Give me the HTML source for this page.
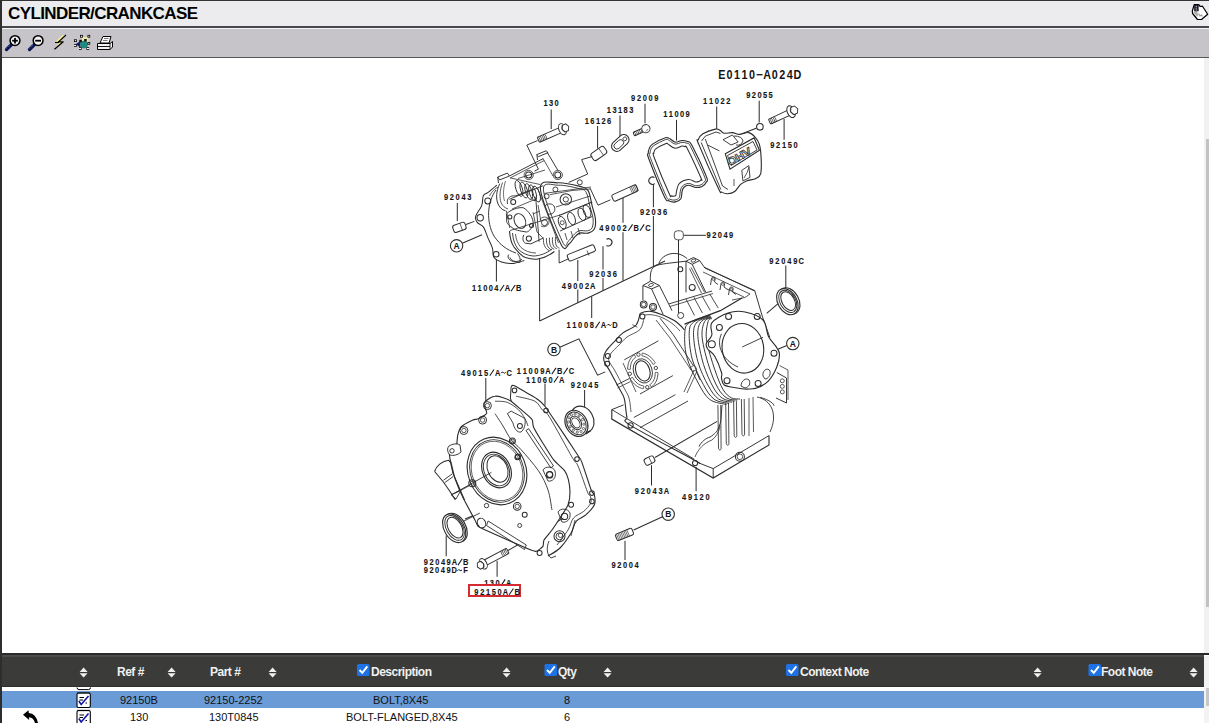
<!DOCTYPE html>
<html><head><meta charset="utf-8">
<style>
html,body{margin:0;padding:0;width:1209px;height:723px;overflow:hidden;background:#fff;font-family:"Liberation Sans",sans-serif;}
.a{position:absolute;}
#lb{left:0;top:0;width:2px;height:723px;background:#2e2f2d;}
#tb{left:0;top:0;width:1209px;height:1px;background:#333;}
#title{left:2px;top:1px;width:1207px;height:25px;background:#ececee;}
#title span{position:absolute;left:6px;top:3px;font-size:17px;font-weight:bold;color:#000;letter-spacing:-0.6px;}
#l1{left:2px;top:26px;width:1207px;height:2px;background:#48474c;}
#l2{left:2px;top:28px;width:1207px;height:1px;background:#f4f4f6;}
#tool{left:2px;top:29px;width:1207px;height:28px;background:#c6c4c8;}
#l3{left:2px;top:57px;width:1207px;height:1px;background:#58585a;}
#draw{left:2px;top:58px;width:1202px;height:595px;background:#fff;}
#sb{left:1204px;top:58px;width:5px;height:595px;background:#f1f1f1;}
#hdr{left:0;top:653px;width:1204px;height:34px;background:#3b3c3a;}
#hdrl{left:0;top:653px;width:1209px;height:2px;background:#2a2a2a;}
#hdrl2{left:0;top:655px;width:1204px;height:2px;background:#4b4b4b;}
#hdrl3{left:0;top:686px;width:1204px;height:1px;background:#2e2f2d;}
#hsb{left:1204px;top:656px;width:5px;height:67px;background:#f3f3f3;}
#th1{left:1206px;top:139px;width:3px;height:468px;background:#c2c2c2;}
#th2{left:1206px;top:688px;width:3px;height:18px;background:#c8c8c8;}
#r0{left:2px;top:687px;width:1202px;height:4px;background:#fff;}
#r1{left:2px;top:691px;width:1202px;height:17px;background:#6a9bd6;}
#r2{left:2px;top:708px;width:1202px;height:15px;background:#fff;}
.h{position:absolute;color:#f0f0f0;font-size:12px;font-weight:bold;top:665px;letter-spacing:-0.5px;}
.c{position:absolute;color:#111;font-size:11px;}
.sort{position:absolute;top:668px;width:8px;height:10px;}
.cb{position:absolute;top:664px;width:12px;height:12px;background:#1e74e6;border-radius:2px;}
.lb{font-family:"Liberation Sans",sans-serif;font-weight:bold;fill:#151515;}
</style></head><body>
<div class="a" id="tb"></div>
<div class="a" id="title"><span>CYLINDER/CRANKCASE</span></div>
<div class="a" id="l1"></div>
<div class="a" id="l2"></div>
<div class="a" id="tool"></div>
<div class="a" id="l3"></div>
<div class="a" id="draw"></div>
<div class="a" id="sb"></div>
<!--DRAW--><svg class="a" style="left:0;top:0" width="1209" height="723" viewBox="0 0 1209 723">
<g class="lb" font-size="12.86"><text transform="translate(721.90 78.90) scale(0.84 1)" text-anchor="middle">E</text><text transform="translate(729.44 78.90) scale(0.84 1)" text-anchor="middle">0</text><text transform="translate(736.98 78.90) scale(0.84 1)" text-anchor="middle">1</text><text transform="translate(744.52 78.90) scale(0.84 1)" text-anchor="middle">1</text><text transform="translate(752.06 78.90) scale(0.84 1)" text-anchor="middle">0</text><line x1="756.60" y1="74.70" x2="762.60" y2="74.70" stroke="#151515" stroke-width="1.3"/><text transform="translate(767.14 78.90) scale(0.84 1)" text-anchor="middle">A</text><text transform="translate(774.68 78.90) scale(0.84 1)" text-anchor="middle">0</text><text transform="translate(782.22 78.90) scale(0.84 1)" text-anchor="middle">2</text><text transform="translate(789.76 78.90) scale(0.84 1)" text-anchor="middle">4</text><text transform="translate(797.30 78.90) scale(0.84 1)" text-anchor="middle">D</text></g>
<g class="lb" font-size="8.90" style="stroke:#151515;stroke-width:0.12"><text transform="translate(545.50 106.20) scale(0.84 1)" text-anchor="middle">1</text><text transform="translate(551.00 106.20) scale(0.84 1)" text-anchor="middle">3</text><text transform="translate(556.50 106.20) scale(0.84 1)" text-anchor="middle">0</text></g>
<g class="lb" font-size="8.90" style="stroke:#151515;stroke-width:0.12"><text transform="translate(608.90 113.00) scale(0.84 1)" text-anchor="middle">1</text><text transform="translate(614.50 113.00) scale(0.84 1)" text-anchor="middle">3</text><text transform="translate(620.10 113.00) scale(0.84 1)" text-anchor="middle">1</text><text transform="translate(625.70 113.00) scale(0.84 1)" text-anchor="middle">8</text><text transform="translate(631.30 113.00) scale(0.84 1)" text-anchor="middle">3</text></g>
<g class="lb" font-size="8.90" style="stroke:#151515;stroke-width:0.12"><text transform="translate(633.20 100.90) scale(0.84 1)" text-anchor="middle">9</text><text transform="translate(638.98 100.90) scale(0.84 1)" text-anchor="middle">2</text><text transform="translate(644.75 100.90) scale(0.84 1)" text-anchor="middle">0</text><text transform="translate(650.52 100.90) scale(0.84 1)" text-anchor="middle">0</text><text transform="translate(656.30 100.90) scale(0.84 1)" text-anchor="middle">9</text></g>
<g class="lb" font-size="8.90" style="stroke:#151515;stroke-width:0.12"><text transform="translate(705.20 103.90) scale(0.84 1)" text-anchor="middle">1</text><text transform="translate(711.00 103.90) scale(0.84 1)" text-anchor="middle">1</text><text transform="translate(716.80 103.90) scale(0.84 1)" text-anchor="middle">0</text><text transform="translate(722.60 103.90) scale(0.84 1)" text-anchor="middle">2</text><text transform="translate(728.40 103.90) scale(0.84 1)" text-anchor="middle">2</text></g>
<g class="lb" font-size="8.90" style="stroke:#151515;stroke-width:0.12"><text transform="translate(748.30 97.80) scale(0.84 1)" text-anchor="middle">9</text><text transform="translate(753.90 97.80) scale(0.84 1)" text-anchor="middle">2</text><text transform="translate(759.50 97.80) scale(0.84 1)" text-anchor="middle">0</text><text transform="translate(765.10 97.80) scale(0.84 1)" text-anchor="middle">5</text><text transform="translate(770.70 97.80) scale(0.84 1)" text-anchor="middle">5</text></g>
<g class="lb" font-size="8.90" style="stroke:#151515;stroke-width:0.12"><text transform="translate(586.80 123.60) scale(0.84 1)" text-anchor="middle">1</text><text transform="translate(592.40 123.60) scale(0.84 1)" text-anchor="middle">6</text><text transform="translate(598.00 123.60) scale(0.84 1)" text-anchor="middle">1</text><text transform="translate(603.60 123.60) scale(0.84 1)" text-anchor="middle">2</text><text transform="translate(609.20 123.60) scale(0.84 1)" text-anchor="middle">6</text></g>
<g class="lb" font-size="8.90" style="stroke:#151515;stroke-width:0.12"><text transform="translate(665.30 116.70) scale(0.84 1)" text-anchor="middle">1</text><text transform="translate(670.90 116.70) scale(0.84 1)" text-anchor="middle">1</text><text transform="translate(676.50 116.70) scale(0.84 1)" text-anchor="middle">0</text><text transform="translate(682.10 116.70) scale(0.84 1)" text-anchor="middle">0</text><text transform="translate(687.70 116.70) scale(0.84 1)" text-anchor="middle">9</text></g>
<g class="lb" font-size="8.90" style="stroke:#151515;stroke-width:0.12"><text transform="translate(772.40 148.20) scale(0.84 1)" text-anchor="middle">9</text><text transform="translate(778.20 148.20) scale(0.84 1)" text-anchor="middle">2</text><text transform="translate(784.00 148.20) scale(0.84 1)" text-anchor="middle">1</text><text transform="translate(789.80 148.20) scale(0.84 1)" text-anchor="middle">5</text><text transform="translate(795.60 148.20) scale(0.84 1)" text-anchor="middle">0</text></g>
<g class="lb" font-size="8.90" style="stroke:#151515;stroke-width:0.12"><text transform="translate(446.10 199.50) scale(0.84 1)" text-anchor="middle">9</text><text transform="translate(451.90 199.50) scale(0.84 1)" text-anchor="middle">2</text><text transform="translate(457.70 199.50) scale(0.84 1)" text-anchor="middle">0</text><text transform="translate(463.50 199.50) scale(0.84 1)" text-anchor="middle">4</text><text transform="translate(469.30 199.50) scale(0.84 1)" text-anchor="middle">3</text></g>
<g class="lb" font-size="8.90" style="stroke:#151515;stroke-width:0.12"><text transform="translate(642.10 214.60) scale(0.84 1)" text-anchor="middle">9</text><text transform="translate(647.83 214.60) scale(0.84 1)" text-anchor="middle">2</text><text transform="translate(653.55 214.60) scale(0.84 1)" text-anchor="middle">0</text><text transform="translate(659.28 214.60) scale(0.84 1)" text-anchor="middle">3</text><text transform="translate(665.00 214.60) scale(0.84 1)" text-anchor="middle">6</text></g>
<g class="lb" font-size="8.90" style="stroke:#151515;stroke-width:0.12"><text transform="translate(601.40 230.70) scale(0.84 1)" text-anchor="middle">4</text><text transform="translate(607.21 230.70) scale(0.84 1)" text-anchor="middle">9</text><text transform="translate(613.02 230.70) scale(0.84 1)" text-anchor="middle">0</text><text transform="translate(618.84 230.70) scale(0.84 1)" text-anchor="middle">0</text><text transform="translate(624.65 230.70) scale(0.84 1)" text-anchor="middle">2</text><line x1="628.36" y1="230.70" x2="632.56" y2="224.40" stroke="#151515" stroke-width="1.05"/><text transform="translate(636.27 230.70) scale(0.84 1)" text-anchor="middle">B</text><line x1="639.99" y1="230.70" x2="644.19" y2="224.40" stroke="#151515" stroke-width="1.05"/><text transform="translate(647.90 230.70) scale(0.84 1)" text-anchor="middle">C</text></g>
<g class="lb" font-size="8.90" style="stroke:#151515;stroke-width:0.12"><text transform="translate(708.70 238.20) scale(0.84 1)" text-anchor="middle">9</text><text transform="translate(714.33 238.20) scale(0.84 1)" text-anchor="middle">2</text><text transform="translate(719.95 238.20) scale(0.84 1)" text-anchor="middle">0</text><text transform="translate(725.58 238.20) scale(0.84 1)" text-anchor="middle">4</text><text transform="translate(731.20 238.20) scale(0.84 1)" text-anchor="middle">9</text></g>
<g class="lb" font-size="8.90" style="stroke:#151515;stroke-width:0.12"><text transform="translate(591.40 277.40) scale(0.84 1)" text-anchor="middle">9</text><text transform="translate(597.27 277.40) scale(0.84 1)" text-anchor="middle">2</text><text transform="translate(603.15 277.40) scale(0.84 1)" text-anchor="middle">0</text><text transform="translate(609.02 277.40) scale(0.84 1)" text-anchor="middle">3</text><text transform="translate(614.90 277.40) scale(0.84 1)" text-anchor="middle">6</text></g>
<g class="lb" font-size="8.90" style="stroke:#151515;stroke-width:0.12"><text transform="translate(771.30 263.90) scale(0.84 1)" text-anchor="middle">9</text><text transform="translate(777.28 263.90) scale(0.84 1)" text-anchor="middle">2</text><text transform="translate(783.26 263.90) scale(0.84 1)" text-anchor="middle">0</text><text transform="translate(789.24 263.90) scale(0.84 1)" text-anchor="middle">4</text><text transform="translate(795.22 263.90) scale(0.84 1)" text-anchor="middle">9</text><text transform="translate(801.20 263.90) scale(0.84 1)" text-anchor="middle">C</text></g>
<g class="lb" font-size="8.90" style="stroke:#151515;stroke-width:0.12"><text transform="translate(474.10 291.30) scale(0.84 1)" text-anchor="middle">1</text><text transform="translate(479.68 291.30) scale(0.84 1)" text-anchor="middle">1</text><text transform="translate(485.25 291.30) scale(0.84 1)" text-anchor="middle">0</text><text transform="translate(490.82 291.30) scale(0.84 1)" text-anchor="middle">0</text><text transform="translate(496.40 291.30) scale(0.84 1)" text-anchor="middle">4</text><line x1="499.88" y1="291.30" x2="504.08" y2="285.00" stroke="#151515" stroke-width="1.05"/><text transform="translate(507.55 291.30) scale(0.84 1)" text-anchor="middle">A</text><line x1="511.02" y1="291.30" x2="515.23" y2="285.00" stroke="#151515" stroke-width="1.05"/><text transform="translate(518.70 291.30) scale(0.84 1)" text-anchor="middle">B</text></g>
<g class="lb" font-size="8.90" style="stroke:#151515;stroke-width:0.12"><text transform="translate(563.80 288.50) scale(0.84 1)" text-anchor="middle">4</text><text transform="translate(569.60 288.50) scale(0.84 1)" text-anchor="middle">9</text><text transform="translate(575.40 288.50) scale(0.84 1)" text-anchor="middle">0</text><text transform="translate(581.20 288.50) scale(0.84 1)" text-anchor="middle">0</text><text transform="translate(587.00 288.50) scale(0.84 1)" text-anchor="middle">2</text><text transform="translate(592.80 288.50) scale(0.84 1)" text-anchor="middle">A</text></g>
<g class="lb" font-size="8.90" style="stroke:#151515;stroke-width:0.12"><text transform="translate(568.60 328.10) scale(0.84 1)" text-anchor="middle">1</text><text transform="translate(574.40 328.10) scale(0.84 1)" text-anchor="middle">1</text><text transform="translate(580.20 328.10) scale(0.84 1)" text-anchor="middle">0</text><text transform="translate(586.00 328.10) scale(0.84 1)" text-anchor="middle">0</text><text transform="translate(591.80 328.10) scale(0.84 1)" text-anchor="middle">8</text><line x1="595.50" y1="328.10" x2="599.70" y2="321.80" stroke="#151515" stroke-width="1.05"/><text transform="translate(603.40 328.10) scale(0.84 1)" text-anchor="middle">A</text><path d="M606.90,325.50 Q608.00,323.50 609.20,324.90 T611.50,324.50" fill="none" stroke="#151515" stroke-width="1.0"/><text transform="translate(615.00 328.10) scale(0.84 1)" text-anchor="middle">D</text></g>
<g class="lb" font-size="8.90" style="stroke:#151515;stroke-width:0.12"><text transform="translate(463.10 375.80) scale(0.84 1)" text-anchor="middle">4</text><text transform="translate(468.86 375.80) scale(0.84 1)" text-anchor="middle">9</text><text transform="translate(474.62 375.80) scale(0.84 1)" text-anchor="middle">0</text><text transform="translate(480.39 375.80) scale(0.84 1)" text-anchor="middle">1</text><text transform="translate(486.15 375.80) scale(0.84 1)" text-anchor="middle">5</text><line x1="489.81" y1="375.80" x2="494.01" y2="369.50" stroke="#151515" stroke-width="1.05"/><text transform="translate(497.68 375.80) scale(0.84 1)" text-anchor="middle">A</text><path d="M501.14,373.20 Q502.24,371.20 503.44,372.60 T505.74,372.20" fill="none" stroke="#151515" stroke-width="1.0"/><text transform="translate(509.20 375.80) scale(0.84 1)" text-anchor="middle">C</text></g>
<g class="lb" font-size="8.90" style="stroke:#151515;stroke-width:0.12"><text transform="translate(518.90 374.20) scale(0.84 1)" text-anchor="middle">1</text><text transform="translate(524.73 374.20) scale(0.84 1)" text-anchor="middle">1</text><text transform="translate(530.57 374.20) scale(0.84 1)" text-anchor="middle">0</text><text transform="translate(536.40 374.20) scale(0.84 1)" text-anchor="middle">0</text><text transform="translate(542.23 374.20) scale(0.84 1)" text-anchor="middle">9</text><text transform="translate(548.07 374.20) scale(0.84 1)" text-anchor="middle">A</text><line x1="551.80" y1="374.20" x2="556.00" y2="367.90" stroke="#151515" stroke-width="1.05"/><text transform="translate(559.73 374.20) scale(0.84 1)" text-anchor="middle">B</text><line x1="563.47" y1="374.20" x2="567.67" y2="367.90" stroke="#151515" stroke-width="1.05"/><text transform="translate(571.40 374.20) scale(0.84 1)" text-anchor="middle">C</text></g>
<g class="lb" font-size="8.90" style="stroke:#151515;stroke-width:0.12"><text transform="translate(528.10 382.50) scale(0.84 1)" text-anchor="middle">1</text><text transform="translate(533.70 382.50) scale(0.84 1)" text-anchor="middle">1</text><text transform="translate(539.30 382.50) scale(0.84 1)" text-anchor="middle">0</text><text transform="translate(544.90 382.50) scale(0.84 1)" text-anchor="middle">6</text><text transform="translate(550.50 382.50) scale(0.84 1)" text-anchor="middle">0</text><line x1="554.00" y1="382.50" x2="558.20" y2="376.20" stroke="#151515" stroke-width="1.05"/><text transform="translate(561.70 382.50) scale(0.84 1)" text-anchor="middle">A</text></g>
<g class="lb" font-size="8.90" style="stroke:#151515;stroke-width:0.12"><text transform="translate(572.90 387.50) scale(0.84 1)" text-anchor="middle">9</text><text transform="translate(578.75 387.50) scale(0.84 1)" text-anchor="middle">2</text><text transform="translate(584.60 387.50) scale(0.84 1)" text-anchor="middle">0</text><text transform="translate(590.45 387.50) scale(0.84 1)" text-anchor="middle">4</text><text transform="translate(596.30 387.50) scale(0.84 1)" text-anchor="middle">5</text></g>
<g class="lb" font-size="8.90" style="stroke:#151515;stroke-width:0.12"><text transform="translate(636.80 494.00) scale(0.84 1)" text-anchor="middle">9</text><text transform="translate(642.74 494.00) scale(0.84 1)" text-anchor="middle">2</text><text transform="translate(648.68 494.00) scale(0.84 1)" text-anchor="middle">0</text><text transform="translate(654.62 494.00) scale(0.84 1)" text-anchor="middle">4</text><text transform="translate(660.56 494.00) scale(0.84 1)" text-anchor="middle">3</text><text transform="translate(666.50 494.00) scale(0.84 1)" text-anchor="middle">A</text></g>
<g class="lb" font-size="8.90" style="stroke:#151515;stroke-width:0.12"><text transform="translate(684.20 499.80) scale(0.84 1)" text-anchor="middle">4</text><text transform="translate(690.03 499.80) scale(0.84 1)" text-anchor="middle">9</text><text transform="translate(695.85 499.80) scale(0.84 1)" text-anchor="middle">1</text><text transform="translate(701.68 499.80) scale(0.84 1)" text-anchor="middle">2</text><text transform="translate(707.50 499.80) scale(0.84 1)" text-anchor="middle">0</text></g>
<g class="lb" font-size="8.90" style="stroke:#151515;stroke-width:0.12"><text transform="translate(613.60 568.00) scale(0.84 1)" text-anchor="middle">9</text><text transform="translate(619.33 568.00) scale(0.84 1)" text-anchor="middle">2</text><text transform="translate(625.05 568.00) scale(0.84 1)" text-anchor="middle">0</text><text transform="translate(630.78 568.00) scale(0.84 1)" text-anchor="middle">0</text><text transform="translate(636.50 568.00) scale(0.84 1)" text-anchor="middle">4</text></g>
<g class="lb" font-size="8.90" style="stroke:#151515;stroke-width:0.12"><text transform="translate(425.90 565.10) scale(0.84 1)" text-anchor="middle">9</text><text transform="translate(431.60 565.10) scale(0.84 1)" text-anchor="middle">2</text><text transform="translate(437.30 565.10) scale(0.84 1)" text-anchor="middle">0</text><text transform="translate(443.00 565.10) scale(0.84 1)" text-anchor="middle">4</text><text transform="translate(448.70 565.10) scale(0.84 1)" text-anchor="middle">9</text><text transform="translate(454.40 565.10) scale(0.84 1)" text-anchor="middle">A</text><line x1="458.00" y1="565.10" x2="462.20" y2="558.80" stroke="#151515" stroke-width="1.05"/><text transform="translate(465.80 565.10) scale(0.84 1)" text-anchor="middle">B</text></g>
<g class="lb" font-size="8.90" style="stroke:#151515;stroke-width:0.12"><text transform="translate(425.90 573.40) scale(0.84 1)" text-anchor="middle">9</text><text transform="translate(431.54 573.40) scale(0.84 1)" text-anchor="middle">2</text><text transform="translate(437.19 573.40) scale(0.84 1)" text-anchor="middle">0</text><text transform="translate(442.83 573.40) scale(0.84 1)" text-anchor="middle">4</text><text transform="translate(448.47 573.40) scale(0.84 1)" text-anchor="middle">9</text><text transform="translate(454.11 573.40) scale(0.84 1)" text-anchor="middle">D</text><path d="M457.46,570.80 Q458.56,568.80 459.76,570.20 T462.06,569.80" fill="none" stroke="#151515" stroke-width="1.0"/><text transform="translate(465.40 573.40) scale(0.84 1)" text-anchor="middle">F</text></g>
<g clip-path="url(#clip130)">
<g class="lb" font-size="8.90" style="stroke:#151515;stroke-width:0.12"><text transform="translate(486.30 585.70) scale(0.84 1)" text-anchor="middle">1</text><text transform="translate(491.90 585.70) scale(0.84 1)" text-anchor="middle">3</text><text transform="translate(497.50 585.70) scale(0.84 1)" text-anchor="middle">0</text><line x1="501.00" y1="585.70" x2="505.20" y2="579.40" stroke="#151515" stroke-width="1.05"/><text transform="translate(508.70 585.70) scale(0.84 1)" text-anchor="middle">A</text></g>
</g>
<defs><clipPath id="clip130"><rect x="400" y="560" width="200" height="25"/></clipPath></defs>
<rect x="469" y="585" width="51" height="11" fill="none" stroke="#d42a32" stroke-width="2"/>
<g class="lb" font-size="8.90" style="stroke:#151515;stroke-width:0.12"><text transform="translate(476.40 594.80) scale(0.84 1)" text-anchor="middle">9</text><text transform="translate(482.21 594.80) scale(0.84 1)" text-anchor="middle">2</text><text transform="translate(488.03 594.80) scale(0.84 1)" text-anchor="middle">1</text><text transform="translate(493.84 594.80) scale(0.84 1)" text-anchor="middle">5</text><text transform="translate(499.66 594.80) scale(0.84 1)" text-anchor="middle">0</text><text transform="translate(505.47 594.80) scale(0.84 1)" text-anchor="middle">A</text><line x1="509.19" y1="594.80" x2="513.39" y2="588.50" stroke="#151515" stroke-width="1.05"/><text transform="translate(517.10 594.80) scale(0.84 1)" text-anchor="middle">B</text></g>
<line x1="551.2" y1="109.4" x2="551.2" y2="129.0" stroke="#2c2c2c" stroke-width="1.01"/>
<line x1="597.6" y1="126.0" x2="597.6" y2="148.5" stroke="#2c2c2c" stroke-width="1.01"/>
<line x1="620.0" y1="115.4" x2="620.0" y2="136.7" stroke="#2c2c2c" stroke-width="1.01"/>
<line x1="645.0" y1="103.8" x2="645.0" y2="123.2" stroke="#2c2c2c" stroke-width="1.01"/>
<line x1="676.5" y1="119.9" x2="676.5" y2="140.6" stroke="#2c2c2c" stroke-width="1.01"/>
<line x1="716.7" y1="106.6" x2="716.7" y2="129.0" stroke="#2c2c2c" stroke-width="1.01"/>
<line x1="759.2" y1="100.8" x2="759.2" y2="122.4" stroke="#2c2c2c" stroke-width="1.01"/>
<line x1="784.1" y1="119.0" x2="784.1" y2="139.8" stroke="#2c2c2c" stroke-width="1.01"/>
<line x1="457.3" y1="203.0" x2="457.3" y2="221.0" stroke="#2c2c2c" stroke-width="1.01"/>
<line x1="496.4" y1="259.5" x2="496.4" y2="281.6" stroke="#2c2c2c" stroke-width="1.01"/>
<line x1="653.4" y1="184.3" x2="653.4" y2="207.3" stroke="#2c2c2c" stroke-width="1.01"/>
<line x1="653.4" y1="216.0" x2="653.4" y2="266.8" stroke="#2c2c2c" stroke-width="1.01"/>
<line x1="623.0" y1="198.0" x2="623.0" y2="222.7" stroke="#2c2c2c" stroke-width="1.01"/>
<line x1="623.0" y1="232.2" x2="623.0" y2="280.7" stroke="#2c2c2c" stroke-width="1.01"/>
<line x1="603.0" y1="246.2" x2="603.0" y2="269.4" stroke="#2c2c2c" stroke-width="1.01"/>
<line x1="603.0" y1="278.0" x2="603.0" y2="290.8" stroke="#2c2c2c" stroke-width="1.01"/>
<line x1="577.8" y1="260.0" x2="577.8" y2="281.0" stroke="#2c2c2c" stroke-width="1.01"/>
<line x1="577.8" y1="289.5" x2="577.8" y2="302.7" stroke="#2c2c2c" stroke-width="1.01"/>
<line x1="539.6" y1="259.0" x2="539.6" y2="321.0" stroke="#2c2c2c" stroke-width="1.01"/>
<line x1="539.6" y1="321.0" x2="665.0" y2="261.0" stroke="#2c2c2c" stroke-width="1.01"/>
<line x1="591.7" y1="296.5" x2="591.7" y2="318.0" stroke="#2c2c2c" stroke-width="1.01"/>
<line x1="683.8" y1="235.3" x2="705.9" y2="235.3" stroke="#2c2c2c" stroke-width="1.01"/>
<line x1="678.5" y1="239.7" x2="678.5" y2="313.0" stroke="#2c2c2c" stroke-width="1.01"/>
<line x1="785.8" y1="265.5" x2="785.8" y2="288.0" stroke="#2c2c2c" stroke-width="1.01"/>
<line x1="485.8" y1="378.0" x2="485.8" y2="401.5" stroke="#2c2c2c" stroke-width="1.01"/>
<line x1="545.0" y1="383.5" x2="545.0" y2="405.6" stroke="#2c2c2c" stroke-width="1.01"/>
<line x1="584.6" y1="390.0" x2="584.6" y2="408.0" stroke="#2c2c2c" stroke-width="1.01"/>
<line x1="651.5" y1="465.2" x2="651.5" y2="485.5" stroke="#2c2c2c" stroke-width="1.01"/>
<line x1="696.1" y1="467.0" x2="696.1" y2="491.3" stroke="#2c2c2c" stroke-width="1.01"/>
<line x1="625.0" y1="540.7" x2="625.0" y2="560.0" stroke="#2c2c2c" stroke-width="1.01"/>
<line x1="446.2" y1="535.6" x2="446.2" y2="556.2" stroke="#2c2c2c" stroke-width="1.01"/>
<line x1="497.1" y1="560.7" x2="497.1" y2="576.7" stroke="#2c2c2c" stroke-width="1.01"/>
<circle cx="456.6" cy="245.8" r="6.2" fill="#fff" stroke="#333" stroke-width="1.12"/>
<text x="456.6" y="249.0" font-size="8.5" text-anchor="middle" class="lb">A</text>
<line x1="462.3" y1="243.3" x2="482.0" y2="234.7" stroke="#2c2c2c" stroke-width="1.01"/>
<circle cx="792.8" cy="343.6" r="6.2" fill="#fff" stroke="#333" stroke-width="1.12"/>
<text x="792.8" y="346.8" font-size="8.5" text-anchor="middle" class="lb">A</text>
<line x1="786.8" y1="345.5" x2="776.2" y2="350.0" stroke="#2c2c2c" stroke-width="1.01"/>
<circle cx="554.0" cy="349.5" r="6.2" fill="#fff" stroke="#333" stroke-width="1.12"/>
<text x="554.0" y="352.7" font-size="8.5" text-anchor="middle" class="lb">B</text>
<polyline points="559.8,347.3 578.9,338.8 597.6,375.2 605.3,371.9" fill="none" stroke="#2c2c2c" stroke-width="1.01"/>
<circle cx="668.2" cy="514.2" r="6.2" fill="#fff" stroke="#333" stroke-width="1.12"/>
<text x="668.2" y="517.4" font-size="8.5" text-anchor="middle" class="lb">B</text>
<line x1="662.5" y1="516.8" x2="633.7" y2="530.0" stroke="#2c2c2c" stroke-width="1.01"/>
<g transform="translate(562.5 129.2) rotate(156.3)"><rect x="0" y="-2.8" width="26.4" height="5.5" rx="1" fill="#fff" stroke="#2c2c2c" stroke-width="0.95"/><path d="M25.1,-2.8 Q24.2,0 25.1,2.8" fill="none" stroke="#2c2c2c" stroke-width="0.7"/><path d="M23.4,-2.8 Q22.5,0 23.4,2.8" fill="none" stroke="#2c2c2c" stroke-width="0.7"/><path d="M21.7,-2.8 Q20.8,0 21.7,2.8" fill="none" stroke="#2c2c2c" stroke-width="0.7"/><path d="M20.0,-2.8 Q19.1,0 20.0,2.8" fill="none" stroke="#2c2c2c" stroke-width="0.7"/><path d="M18.3,-2.8 Q17.4,0 18.3,2.8" fill="none" stroke="#2c2c2c" stroke-width="0.7"/><ellipse cx="0" cy="0" rx="3.6" ry="5.8" fill="#fff" stroke="#2c2c2c" stroke-width="1.0"/><polygon points="0.4,0.0 -1.4,3.6 -5.0,3.6 -6.8,0.0 -5.0,-3.6 -1.4,-3.6" fill="#fff" stroke="#2c2c2c" stroke-width="0.9"/><path d="M-1.2,-3.6 Q2.0,0 -1.2,3.6" fill="none" stroke="#2c2c2c" stroke-width="0.7"/></g>
<g transform="translate(598.8 153.4) rotate(-35.2)"><rect x="-7.9" y="-4.2" width="15.8" height="8.5" rx="2.5" fill="#fff" stroke="#2c2c2c" stroke-width="1.01"/><line x1="2.8" y1="-4.2" x2="2.8" y2="4.2" stroke="#2c2c2c" stroke-width="0.7"/></g>
<g transform="translate(620.3 143) rotate(-42)"><rect x="-10" y="-5.2" width="20" height="10.4" rx="5.2" fill="#fff" stroke="#2c2c2c" stroke-width="1.05"/><rect x="-7.5" y="-3" width="11" height="6" rx="3" fill="none" stroke="#2c2c2c" stroke-width="0.85"/><circle cx="6.2" cy="0" r="1.9" fill="none" stroke="#2c2c2c" stroke-width="0.8"/></g>
<g transform="translate(645.9 128.7) rotate(155.6)"><rect x="0" y="-1.9" width="13.3" height="3.8" rx="1" fill="#fff" stroke="#2c2c2c" stroke-width="0.95"/><path d="M12.0,-1.9 Q11.1,0 12.0,1.9" fill="none" stroke="#2c2c2c" stroke-width="0.7"/><path d="M10.3,-1.9 Q9.4,0 10.3,1.9" fill="none" stroke="#2c2c2c" stroke-width="0.7"/><path d="M8.6,-1.9 Q7.7,0 8.6,1.9" fill="none" stroke="#2c2c2c" stroke-width="0.7"/><path d="M6.9,-1.9 Q6.0,0 6.9,1.9" fill="none" stroke="#2c2c2c" stroke-width="0.7"/><path d="M5.2,-1.9 Q4.3,0 5.2,1.9" fill="none" stroke="#2c2c2c" stroke-width="0.7"/><circle cx="0" cy="0" r="4.1" fill="#fff" stroke="#2c2c2c" stroke-width="0.95"/><path d="M-2.0,-1.2 L1.2,-2.5" stroke="#2c2c2c" stroke-width="0.6"/></g>
<circle cx="759.9" cy="126.8" r="3.3" fill="none" stroke="#2c2c2c" stroke-width="1.12"/>
<g transform="translate(791.1 111.7) rotate(155.2)"><rect x="0" y="-2.7" width="23.8" height="5.4" rx="1" fill="#fff" stroke="#2c2c2c" stroke-width="0.95"/><path d="M22.5,-2.7 Q21.6,0 22.5,2.7" fill="none" stroke="#2c2c2c" stroke-width="0.7"/><path d="M20.8,-2.7 Q19.9,0 20.8,2.7" fill="none" stroke="#2c2c2c" stroke-width="0.7"/><path d="M19.1,-2.7 Q18.2,0 19.1,2.7" fill="none" stroke="#2c2c2c" stroke-width="0.7"/><path d="M17.4,-2.7 Q16.5,0 17.4,2.7" fill="none" stroke="#2c2c2c" stroke-width="0.7"/><ellipse cx="0" cy="0" rx="3.8" ry="6.2" fill="#fff" stroke="#2c2c2c" stroke-width="1.0"/><polygon points="0.4,0.0 -1.5,3.9 -5.3,3.9 -7.3,0.0 -5.3,-3.9 -1.5,-3.9" fill="#fff" stroke="#2c2c2c" stroke-width="0.9"/><path d="M-1.2,-3.8 Q2.2,0 -1.2,3.8" fill="none" stroke="#2c2c2c" stroke-width="0.7"/></g>
<line x1="726.3" y1="139.8" x2="756.2" y2="128.2" stroke="#2c2c2c" stroke-width="1.01"/>
<g transform="translate(459.4 227.4) rotate(-20.0)"><rect x="-6.4" y="-3.8" width="12.9" height="7.5" rx="2.2" fill="#fff" stroke="#2c2c2c" stroke-width="1.01"/><line x1="1.9" y1="-3.8" x2="1.9" y2="3.8" stroke="#2c2c2c" stroke-width="0.7"/></g>
<line x1="466.0" y1="224.5" x2="474.3" y2="221.4" stroke="#2c2c2c" stroke-width="1.01"/>
<g transform="translate(624.8 193.1) rotate(-24.4)"><rect x="-13.3" y="-3.5" width="26.7" height="7.0" rx="1.8" fill="#fff" stroke="#2c2c2c" stroke-width="1.01"/><line x1="6.9" y1="-3.5" x2="6.9" y2="3.5" stroke="#2c2c2c" stroke-width="0.6"/><line x1="8.5" y1="-3.5" x2="8.5" y2="3.5" stroke="#2c2c2c" stroke-width="0.6"/><line x1="10.1" y1="-3.5" x2="10.1" y2="3.5" stroke="#2c2c2c" stroke-width="0.6"/><line x1="11.7" y1="-3.5" x2="11.7" y2="3.5" stroke="#2c2c2c" stroke-width="0.6"/><line x1="13.3" y1="-3.5" x2="13.3" y2="3.5" stroke="#2c2c2c" stroke-width="0.6"/></g>
<path d="M654.5,177.5 A3.7,3.7 0 1 0 654.8,183.6" fill="none" stroke="#2c2c2c" stroke-width="1.12"/>
<path d="M606.5,239.2 A3.6,3.6 0 1 1 606.5,245.4" fill="none" stroke="#2c2c2c" stroke-width="1.12"/>
<g transform="translate(581.4 252.9) rotate(-22.1)"><rect x="-14.4" y="-3.5" width="28.7" height="7.0" rx="1.8" fill="#fff" stroke="#2c2c2c" stroke-width="1.01"/></g>
<line x1="587.0" y1="250.5" x2="589.0" y2="255.5" stroke="#2c2c2c" stroke-width="0.78"/>
<rect x="674.3" y="230.8" width="9" height="9" rx="3" fill="#fff" stroke="#404040" stroke-width="0.9"/>
<ellipse cx="789.2" cy="300.8" rx="9.5" ry="14.0" transform="rotate(-30 789.2 300.8)" fill="none" stroke="#2c2c2c" stroke-width="1.12"/>
<ellipse cx="787.4" cy="301.7" rx="9.5" ry="14.0" transform="rotate(-30 787.4 301.7)" fill="#fff" stroke="#2c2c2c" stroke-width="1.12"/>
<ellipse cx="787.8" cy="301.4" rx="7.8" ry="12.0" transform="rotate(-30 787.8 301.4)" fill="none" stroke="#2c2c2c" stroke-width="0.90"/>
<ellipse cx="788.2" cy="301.1" rx="6.2" ry="10.2" transform="rotate(-30 788.2 301.1)" fill="none" stroke="#2c2c2c" stroke-width="1.01"/>
<line x1="777.8" y1="303.8" x2="766.7" y2="313.4" stroke="#2c2c2c" stroke-width="1.01"/>
<ellipse cx="582.5" cy="419.3" rx="10.7" ry="13.8" transform="rotate(-30 582.5 419.3)" fill="#fff" stroke="#2c2c2c" stroke-width="1.12"/>
<line x1="586.0" y1="434.0" x2="591.0" y2="430.5" stroke="#2c2c2c" stroke-width="1.01"/>
<ellipse cx="576.4" cy="423.4" rx="10.7" ry="13.8" transform="rotate(-30 576.4 423.4)" fill="#fff" stroke="#2c2c2c" stroke-width="1.12"/>
<ellipse cx="576.4" cy="423.4" rx="9.0" ry="12.0" transform="rotate(-30 576.4 423.4)" fill="none" stroke="#2c2c2c" stroke-width="0.90"/>
<ellipse cx="575.9" cy="422.9" rx="5.2" ry="7.2" transform="rotate(-30 575.9 422.9)" fill="none" stroke="#2c2c2c" stroke-width="0.90"/>
<ellipse cx="575.9" cy="422.9" rx="3.6" ry="5.4" transform="rotate(-30 575.9 422.9)" fill="none" stroke="#2c2c2c" stroke-width="0.90"/>
<circle cx="582.3" cy="419.6" r="1.1" fill="none" stroke="#2c2c2c" stroke-width="0.67"/>
<circle cx="583.9" cy="424.2" r="1.1" fill="none" stroke="#2c2c2c" stroke-width="0.67"/>
<circle cx="583.4" cy="428.5" r="1.1" fill="none" stroke="#2c2c2c" stroke-width="0.67"/>
<circle cx="581.0" cy="431.4" r="1.1" fill="none" stroke="#2c2c2c" stroke-width="0.67"/>
<circle cx="577.3" cy="432.1" r="1.1" fill="none" stroke="#2c2c2c" stroke-width="0.67"/>
<circle cx="573.3" cy="430.3" r="1.1" fill="none" stroke="#2c2c2c" stroke-width="0.67"/>
<circle cx="570.1" cy="426.7" r="1.1" fill="none" stroke="#2c2c2c" stroke-width="0.67"/>
<circle cx="568.5" cy="422.0" r="1.1" fill="none" stroke="#2c2c2c" stroke-width="0.67"/>
<circle cx="569.0" cy="417.7" r="1.1" fill="none" stroke="#2c2c2c" stroke-width="0.67"/>
<circle cx="571.4" cy="414.8" r="1.1" fill="none" stroke="#2c2c2c" stroke-width="0.67"/>
<circle cx="575.1" cy="414.1" r="1.1" fill="none" stroke="#2c2c2c" stroke-width="0.67"/>
<circle cx="579.1" cy="415.9" r="1.1" fill="none" stroke="#2c2c2c" stroke-width="0.67"/>
<ellipse cx="455.7" cy="527.6" rx="10.0" ry="15.5" transform="rotate(-30 455.7 527.6)" fill="none" stroke="#2c2c2c" stroke-width="1.12"/>
<ellipse cx="454.2" cy="528.2" rx="10.0" ry="15.5" transform="rotate(-30 454.2 528.2)" fill="#fff" stroke="#2c2c2c" stroke-width="1.12"/>
<ellipse cx="454.6" cy="527.9" rx="8.2" ry="13.5" transform="rotate(-30 454.6 527.9)" fill="none" stroke="#2c2c2c" stroke-width="0.90"/>
<ellipse cx="455.0" cy="527.6" rx="6.6" ry="11.3" transform="rotate(-30 455.0 527.6)" fill="none" stroke="#2c2c2c" stroke-width="1.01"/>
<line x1="465.0" y1="519.0" x2="482.0" y2="512.0" stroke="#2c2c2c" stroke-width="1.01"/>
<g transform="translate(483.2 563.8) rotate(-27.9)"><rect x="0" y="-2.9" width="27.8" height="5.8" rx="1" fill="#fff" stroke="#2c2c2c" stroke-width="0.95"/><path d="M26.5,-2.9 Q25.6,0 26.5,2.9" fill="none" stroke="#2c2c2c" stroke-width="0.7"/><path d="M24.8,-2.9 Q23.9,0 24.8,2.9" fill="none" stroke="#2c2c2c" stroke-width="0.7"/><path d="M23.1,-2.9 Q22.2,0 23.1,2.9" fill="none" stroke="#2c2c2c" stroke-width="0.7"/><path d="M21.4,-2.9 Q20.5,0 21.4,2.9" fill="none" stroke="#2c2c2c" stroke-width="0.7"/><ellipse cx="0" cy="0" rx="3.5" ry="5.6" fill="#fff" stroke="#2c2c2c" stroke-width="1.0"/><polygon points="0.4,0.0 -1.3,3.5 -4.8,3.5 -6.6,0.0 -4.8,-3.5 -1.3,-3.5" fill="#fff" stroke="#2c2c2c" stroke-width="0.9"/><path d="M-1.1,-3.5 Q2.0,0 -1.1,3.5" fill="none" stroke="#2c2c2c" stroke-width="0.7"/></g>
<line x1="508.0" y1="550.5" x2="563.3" y2="518.1" stroke="#2c2c2c" stroke-width="1.01"/>
<g transform="translate(649.5 460.6) rotate(-26.3)"><rect x="-5.1" y="-3.5" width="10.2" height="7.0" rx="2.1" fill="#fff" stroke="#2c2c2c" stroke-width="1.01"/><line x1="0.9" y1="-3.5" x2="0.9" y2="3.5" stroke="#2c2c2c" stroke-width="0.7"/></g>
<line x1="655.0" y1="457.5" x2="717.1" y2="421.4" stroke="#2c2c2c" stroke-width="1.01"/>
<g transform="translate(624.5 534.4) rotate(-22.4)"><rect x="-8.9" y="-3.5" width="17.8" height="7.0" rx="1.8" fill="#fff" stroke="#2c2c2c" stroke-width="1.01"/><line x1="-7.3" y1="-3.5" x2="-7.3" y2="3.5" stroke="#2c2c2c" stroke-width="0.6"/><line x1="-5.7" y1="-3.5" x2="-5.7" y2="3.5" stroke="#2c2c2c" stroke-width="0.6"/><line x1="-4.1" y1="-3.5" x2="-4.1" y2="3.5" stroke="#2c2c2c" stroke-width="0.6"/><line x1="-2.5" y1="-3.5" x2="-2.5" y2="3.5" stroke="#2c2c2c" stroke-width="0.6"/><line x1="-0.9" y1="-3.5" x2="-0.9" y2="3.5" stroke="#2c2c2c" stroke-width="0.6"/><line x1="0.7" y1="-3.5" x2="0.7" y2="3.5" stroke="#2c2c2c" stroke-width="0.6"/><line x1="2.3" y1="-3.5" x2="2.3" y2="3.5" stroke="#2c2c2c" stroke-width="0.6"/><line x1="3.9" y1="-3.5" x2="3.9" y2="3.5" stroke="#2c2c2c" stroke-width="0.6"/></g>
<path d="M648.8,149.9 C649.4,148.4 649.4,146.4 652.2,144.4 C655.0,142.4 662.5,138.6 665.4,137.7 C668.3,136.8 668.2,138.1 669.9,138.8 C671.6,139.6 673.4,141.9 675.4,142.2 C677.4,142.5 680.0,140.6 682.0,140.5 C684.0,140.4 685.9,140.8 687.6,141.6 C689.3,142.4 688.9,139.7 692.0,145.5 C695.1,151.3 704.0,170.4 706.4,176.5 C708.8,182.6 707.1,180.3 706.4,182.0 C705.7,183.7 703.9,185.5 702.0,186.4 C700.1,187.3 697.5,187.7 695.3,187.5 C693.1,187.3 690.6,185.3 688.7,185.3 C686.8,185.3 684.8,186.4 683.7,187.5 C682.6,188.6 682.5,190.2 682.0,192.0 C681.5,193.8 682.0,196.9 680.9,198.6 C679.8,200.2 677.4,201.5 675.4,201.9 C673.4,202.3 670.6,201.7 668.8,200.8 C666.9,199.9 667.6,203.4 664.3,196.4 C661.0,189.4 651.5,166.0 648.8,158.8 C646.1,151.6 648.3,154.7 648.3,153.2 C648.3,151.7 648.1,151.4 648.8,149.9Z" fill="none" stroke="#2c2c2c" stroke-width="1.12"/>
<path d="M650.5,150.5 C651.1,149.3 650.9,147.6 653.5,145.8 C656.0,144.0 663.0,140.5 665.6,139.6 C668.2,138.7 667.6,139.7 669.2,140.5 C670.8,141.2 673.0,143.8 675.1,144.1 C677.2,144.4 680.1,142.5 682.1,142.3 C684.0,142.2 685.4,142.6 686.8,143.3 C688.2,144.0 687.6,141.0 690.5,146.6 C693.5,152.2 702.3,171.1 704.6,176.9 C706.9,182.7 705.2,180.0 704.6,181.3 C704.0,182.6 702.7,184.0 701.1,184.7 C699.6,185.5 697.5,185.9 695.4,185.7 C693.4,185.4 690.8,183.3 688.6,183.4 C686.4,183.5 683.7,184.8 682.3,186.2 C680.9,187.5 680.8,189.6 680.3,191.5 C679.7,193.4 680.1,196.1 679.3,197.5 C678.4,198.9 676.6,199.7 675.0,200.0 C673.4,200.3 671.2,199.9 669.7,199.1 C668.1,198.3 669.0,202.2 665.8,195.4 C662.6,188.6 653.2,165.4 650.6,158.4 C648.0,151.3 650.1,154.6 650.1,153.3 C650.1,151.9 650.0,151.8 650.5,150.5Z" fill="none" stroke="#2c2c2c" stroke-width="0.90"/>
<path d="M654.1,151.8 C654.4,151.0 654.1,150.0 656.1,148.6 C658.1,147.2 664.1,144.3 666.1,143.5 C668.0,142.7 666.3,143.2 667.7,143.9 C669.2,144.7 672.1,147.7 674.5,148.1 C676.9,148.5 680.4,146.4 682.2,146.1 C683.9,145.9 684.2,146.3 685.1,146.7 C686.0,147.2 684.9,143.7 687.5,148.9 C690.1,154.0 698.7,172.6 700.9,177.7 C703.1,182.9 701.2,179.1 700.9,179.7 C700.6,180.3 700.2,180.9 699.4,181.3 C698.5,181.6 697.6,182.2 695.7,181.9 C693.9,181.5 691.2,179.2 688.4,179.4 C685.7,179.7 681.3,181.5 679.4,183.4 C677.4,185.3 677.2,188.6 676.7,190.6 C676.1,192.5 676.3,194.3 675.9,195.2 C675.5,196.1 675.1,196.1 674.3,196.1 C673.6,196.2 672.3,196.1 671.4,195.7 C670.5,195.2 671.8,199.6 669.0,193.3 C666.1,186.9 656.7,164.1 654.2,157.5 C651.7,150.8 653.9,154.3 653.8,153.4 C653.8,152.4 653.7,152.6 654.1,151.8Z" fill="none" stroke="#2c2c2c" stroke-width="1.01"/>
<path d="M698.2,139.7 C698.9,137.9 700.0,135.6 702.9,133.8 C705.8,132.0 712.4,129.7 715.3,129.1 C718.1,128.5 718.5,129.6 720.0,130.3 C721.5,131.0 722.0,132.8 724.1,133.2 C726.2,133.6 729.9,132.4 732.4,132.6 C734.9,132.8 736.7,134.4 739.4,134.4 C742.1,134.4 746.2,132.2 748.8,132.6 C751.3,133.0 752.9,134.8 754.7,136.8 C756.5,138.8 758.3,140.6 759.4,144.4 C760.5,148.2 761.0,154.8 761.2,159.7 C761.4,164.6 761.5,170.7 760.6,173.8 C759.7,176.9 758.2,177.3 755.9,178.5 C753.5,179.7 749.0,179.9 746.5,180.9 C744.0,181.9 742.6,182.6 740.6,184.4 C738.6,186.2 736.9,189.9 734.7,191.5 C732.5,193.1 729.8,193.7 727.6,193.8 C725.5,193.9 723.4,193.1 721.8,192.1 C720.2,191.1 722.0,195.9 718.2,188.0 C714.4,180.1 702.1,152.5 698.8,144.4 C695.5,136.3 697.5,141.5 698.2,139.7Z" fill="#fff" stroke="#2c2c2c" stroke-width="1.12"/>
<polyline points="701.5,141.0 705.5,136.0 716.0,132.0 720.5,133.5" fill="none" stroke="#2c2c2c" stroke-width="0.90"/>
<polyline points="701.2,142.5 720.8,189.5" fill="none" stroke="#2c2c2c" stroke-width="0.90"/>
<polyline points="705.3,139.0 722.5,186.0 728.0,189.5" fill="none" stroke="#2c2c2c" stroke-width="0.90"/>
<line x1="707.6" y1="145.0" x2="719.4" y2="150.9" stroke="#2c2c2c" stroke-width="0.90"/>
<polygon points="725.3,153.8 754.1,137.9 759.4,150.3 730.0,169.1" fill="none" stroke="#2c2c2c" stroke-width="1.12"/>
<polygon points="727.5,155.5 753.0,141.5 757.0,150.0 731.0,165.5" fill="none" stroke="#2c2c2c" stroke-width="0.90"/>
<text transform="translate(729.5,166) rotate(-29) scale(1.15 1)" font-size="10.5" style="font-family:Liberation Sans;font-weight:bold;fill:#fff;stroke:#2c2c2c;stroke-width:0.75">OHV</text>
<polygon points="723.0,139.7 732.4,135.0 738.2,142.0 731.0,145.0" fill="none" stroke="#2c2c2c" stroke-width="0.90"/>
<path d="M734,136 Q742,136 743,141 Q741,146 736,145" fill="none" stroke="#2c2c2c" stroke-width="0.90"/>
<polygon points="741.8,170.3 748.8,165.6 750.0,177.4 742.9,180.9" fill="none" stroke="#2c2c2c" stroke-width="0.90"/>
<path d="M744,178 Q748,172 749,167" fill="none" stroke="#2c2c2c" stroke-width="0.78"/>
<line x1="734.0" y1="179.0" x2="734.0" y2="186.0" stroke="#2c2c2c" stroke-width="0.78"/>
<path d="M524.3,260.4 C522.5,260.9 517.5,263.1 513.7,263.4 C509.9,263.6 504.8,262.9 501.5,261.9 C498.2,260.9 495.4,259.6 493.9,257.3 C492.4,255.0 493.4,251.5 492.4,248.2 C491.4,244.9 489.3,241.1 487.8,237.6 C486.3,234.1 485.1,229.4 483.3,226.9 C481.5,224.4 478.5,224.2 477.2,222.4 C475.9,220.6 474.9,219.1 475.6,216.3 C476.4,213.5 480.4,209.0 481.7,205.6 C483.0,202.2 482.3,197.8 483.3,195.7 C484.3,193.5 486.3,193.8 487.8,192.7 C489.3,191.6 490.9,190.2 492.4,188.9 C493.9,187.6 496.1,185.7 496.9,185.1" fill="none" stroke="#2c2c2c" stroke-width="1.01"/>
<circle cx="487.8" cy="201.0" r="3.0" fill="none" stroke="#2c2c2c" stroke-width="1.01"/>
<circle cx="480.2" cy="217.8" r="3.2" fill="none" stroke="#2c2c2c" stroke-width="1.01"/>
<circle cx="496.2" cy="254.3" r="2.8" fill="none" stroke="#2c2c2c" stroke-width="1.01"/>
<path d="M496,190 C487,202 486,222 494,236 C500,245 507,250 516,253" fill="none" stroke="#2c2c2c" stroke-width="0.95"/>
<path d="M498,187 C493,190 491,193 489.5,196" fill="none" stroke="#2c2c2c" stroke-width="0.78"/>
<polygon points="497.7,177.0 507.4,173.1 509.4,176.0 499.7,179.9" fill="#fff" stroke="#2c2c2c" stroke-width="0.95"/>
<polyline points="497.7,177.0 498.5,183.0" fill="none" stroke="#2c2c2c" stroke-width="0.95"/>
<polyline points="509.4,176.0 543.2,158.6" fill="none" stroke="#2c2c2c" stroke-width="0.95"/>
<polyline points="510.3,177.9 544.2,160.5" fill="none" stroke="#2c2c2c" stroke-width="0.78"/>
<polygon points="536.5,154.7 546.1,150.8 548.1,152.7 538.4,156.6" fill="#fff" stroke="#2c2c2c" stroke-width="0.95"/>
<polyline points="537.0,155.5 537.5,160.0" fill="none" stroke="#2c2c2c" stroke-width="0.95"/>
<polyline points="547.0,152.0 557.8,170.2" fill="none" stroke="#2c2c2c" stroke-width="0.95"/>
<polyline points="543.0,158.5 553.0,176.0" fill="none" stroke="#2c2c2c" stroke-width="0.78"/>
<path d="M499.7,183.7 C496,192 496,198 497.7,203 C499,207 502,210 505.5,210.8" fill="none" stroke="#2c2c2c" stroke-width="0.95"/>
<path d="M502.5,182.5 C499.5,191 499.5,198 501,202.5 C502.5,206 505,208 508,209" fill="none" stroke="#2c2c2c" stroke-width="0.78"/>
<path d="M505.5,181 C503,189 503,196 504.5,201" fill="none" stroke="#2c2c2c" stroke-width="0.67"/>
<circle cx="528.7" cy="175.0" r="3.0" fill="none" stroke="#2c2c2c" stroke-width="1.01"/>
<circle cx="528.7" cy="175.0" r="4.6" fill="none" stroke="#2c2c2c" stroke-width="0.78"/>
<circle cx="557.8" cy="175.0" r="3.0" fill="none" stroke="#2c2c2c" stroke-width="1.01"/>
<circle cx="557.8" cy="175.0" r="4.6" fill="none" stroke="#2c2c2c" stroke-width="0.78"/>
<circle cx="513.2" cy="202.1" r="2.5" fill="none" stroke="#2c2c2c" stroke-width="1.01"/>
<path d="M507.5,204 C506,198 511,195 515,196 L531,190" fill="none" stroke="#2c2c2c" stroke-width="0.90"/>
<polyline points="537.5,140.6 526.8,145.1 538.4,169.2 534.5,171.1" fill="none" stroke="#2c2c2c" stroke-width="0.95"/>
<polyline points="592.3,156.5 581.6,159.6 587.7,174.0 568.7,182.4" fill="none" stroke="#2c2c2c" stroke-width="0.95"/>
<ellipse cx="519.0" cy="188.4" rx="3.2" ry="8.2" transform="rotate(-18 519.0 188.4)" fill="none" stroke="#2c2c2c" stroke-width="0.90"/>
<ellipse cx="523.9" cy="190.0" rx="3.2" ry="8.2" transform="rotate(-18 523.9 190.0)" fill="none" stroke="#2c2c2c" stroke-width="0.90"/>
<ellipse cx="528.7" cy="191.6" rx="3.2" ry="8.2" transform="rotate(-18 528.7 191.6)" fill="none" stroke="#2c2c2c" stroke-width="0.90"/>
<ellipse cx="532.6" cy="192.8" rx="3.2" ry="8.2" transform="rotate(-18 532.6 192.8)" fill="none" stroke="#2c2c2c" stroke-width="0.90"/>
<ellipse cx="536.5" cy="194.1" rx="3.2" ry="8.2" transform="rotate(-18 536.5 194.1)" fill="none" stroke="#2c2c2c" stroke-width="0.90"/>
<polyline points="509.4,199.2 543.2,185.7" fill="none" stroke="#2c2c2c" stroke-width="0.90"/>
<polyline points="518.0,178.5 545.0,170.0" fill="none" stroke="#2c2c2c" stroke-width="0.78"/>
<path d="M506.6,213.8 C510,210 518,207 523.2,207.7 C528,210 534,218 533.1,224.3 C531,230 528,232 526.5,232 C520,231 514,230 512.1,227.6 C508,225 506,222 506.6,219.9 Z" fill="none" stroke="#2c2c2c" stroke-width="0.95"/>
<ellipse cx="519.9" cy="221.0" rx="5.5" ry="7.7" transform="rotate(-25 519.9 221.0)" fill="none" stroke="#2c2c2c" stroke-width="0.95"/>
<circle cx="509.9" cy="217.1" r="2.0" fill="none" stroke="#2c2c2c" stroke-width="1.01"/>
<circle cx="531.5" cy="225.4" r="2.0" fill="none" stroke="#2c2c2c" stroke-width="1.01"/>
<path d="M512,209 L536,199 M533,214 L540,211" fill="none" stroke="#2c2c2c" stroke-width="0.78"/>
<path d="M509.5,231 C510,238 511,243 514,247 C518,252 521,256 525.4,257.6 C530,259 534,259.5 537.6,259.1 C544,258 550,255 554.4,251.5" fill="none" stroke="#2c2c2c" stroke-width="1.06"/>
<path d="M512.5,233 C513,240 515,245 518,249 C522,253 527,255.5 533,256 C540,256 547,253 552,249" fill="none" stroke="#2c2c2c" stroke-width="0.90"/>
<path d="M515.5,234 C516,240 518,244 521,247.5 C525,251 530,253 536,253" fill="none" stroke="#2c2c2c" stroke-width="0.78"/>
<path d="M523.9,234.8 C522,238 523,242 525.4,243.2 L530.8,243.9 L543.7,237.8" fill="none" stroke="#2c2c2c" stroke-width="0.95"/>
<circle cx="528.9" cy="238.6" r="2.6" fill="none" stroke="#2c2c2c" stroke-width="1.01"/>
<path d="M543.5,238.5 C543.0,244.0 545.0,248.5 549.0,250.5" fill="none" stroke="#2c2c2c" stroke-width="0.84"/>
<path d="M546.5,238.1 C546.0,244.0 547.8,248.2 551.6,249.9" fill="none" stroke="#2c2c2c" stroke-width="0.84"/>
<path d="M549.5,237.7 C549.0,244.0 550.6,247.9 554.2,249.3" fill="none" stroke="#2c2c2c" stroke-width="0.84"/>
<path d="M552.5,237.3 C552.0,244.0 553.4,247.6 556.8,248.7" fill="none" stroke="#2c2c2c" stroke-width="0.84"/>
<path d="M555.5,236.9 C555.0,244.0 556.2,247.3 559.4,248.1" fill="none" stroke="#2c2c2c" stroke-width="0.84"/>
<path d="M508.7,254.6 C506.5,258 510,262.5 520.1,262.2 C521,259 519,255.5 517.5,253.5" fill="none" stroke="#2c2c2c" stroke-width="0.95"/>
<polyline points="510.0,230.5 560.0,215.0" fill="none" stroke="#2c2c2c" stroke-width="0.78"/>
<path d="M533,212 L537,232 L543,238" fill="none" stroke="#2c2c2c" stroke-width="0.78"/>
<path d="M538,205 L541,222" fill="none" stroke="#2c2c2c" stroke-width="0.78"/>
<path d="M540.4,188.5 C539.9,178.2 551.4,183.2 558.0,182.8 C564.6,182.5 574.8,185.1 579.8,186.4 C584.8,187.7 586.0,187.3 588.1,190.6 C590.2,193.9 591.0,201.4 592.2,206.1 C593.4,210.8 595.0,214.8 595.4,218.6 C595.8,222.4 595.5,226.6 594.3,229.0 C593.1,231.4 590.5,232.4 588.1,233.1 C585.7,233.8 582.0,232.4 579.8,233.1 C577.5,233.8 576.3,235.5 574.6,237.2 C572.9,238.9 571.6,242.3 569.4,243.5 C567.1,244.7 565.9,253.7 561.1,244.5 C556.3,235.3 540.9,198.8 540.4,188.5Z" fill="none" stroke="#2c2c2c" stroke-width="1.12"/>
<path d="M543.4,189.9 C542.6,180.5 552.2,185.4 558.2,185.2 C564.1,184.9 574.4,187.4 579.1,188.6 C583.7,189.8 584.3,189.2 586.1,192.2 C588.0,195.2 588.8,202.2 590.0,206.7 C591.1,211.1 592.7,215.3 593.1,218.8 C593.4,222.3 593.1,225.7 592.1,227.7 C591.2,229.7 589.6,230.3 587.4,230.8 C585.2,231.3 581.4,230.0 579.0,230.8 C576.6,231.6 574.8,233.8 573.0,235.5 C571.2,237.3 569.9,240.3 568.2,241.3 C566.5,242.4 566.8,250.6 562.6,242.0 C558.5,233.4 544.1,199.4 543.4,189.9Z" fill="none" stroke="#2c2c2c" stroke-width="0.90"/>
<polyline points="537.5,188.0 558.5,243.0" fill="none" stroke="#2c2c2c" stroke-width="0.78"/>
<polyline points="535.7,196.9 539.1,241.8" fill="none" stroke="#2c2c2c" stroke-width="0.90"/>
<polyline points="509.8,177.8 540.0,184.5" fill="none" stroke="#2c2c2c" stroke-width="0.78"/>
<polyline points="506.3,210.7 509.8,228.0" fill="none" stroke="#2c2c2c" stroke-width="0.78"/>
<path d="M509.8,257.4 C512,262 518,263 522,259" fill="none" stroke="#2c2c2c" stroke-width="0.90"/>
<polyline points="544.3,193.4 591.0,187.0" fill="none" stroke="#2c2c2c" stroke-width="0.78"/>
<circle cx="565.8" cy="199.4" r="5.7" fill="none" stroke="#2c2c2c" stroke-width="1.01"/>
<circle cx="565.8" cy="199.4" r="2.6" fill="none" stroke="#2c2c2c" stroke-width="0.90"/>
<path d="M545,206 C547,203 553,203 554.5,207 C556,212 552,215 548,214" fill="none" stroke="#2c2c2c" stroke-width="0.90"/>
<circle cx="555.4" cy="189.5" r="2.5" fill="none" stroke="#2c2c2c" stroke-width="0.90"/>
<circle cx="546.6" cy="196.3" r="2.5" fill="none" stroke="#2c2c2c" stroke-width="0.90"/>
<circle cx="544.5" cy="222.7" r="3.0" fill="none" stroke="#2c2c2c" stroke-width="0.90"/>
<path d="M540,220 C541,216 548,216 549,220 C550,226 544,228 541,226" fill="none" stroke="#2c2c2c" stroke-width="0.78"/>
<circle cx="579.8" cy="182.3" r="2.5" fill="none" stroke="#2c2c2c" stroke-width="0.90"/>
<polyline points="549.7,194.7 572.0,190.5 590.0,189.0" fill="none" stroke="#2c2c2c" stroke-width="0.78"/>
<polyline points="556.0,207.0 590.0,196.0" fill="none" stroke="#2c2c2c" stroke-width="0.78"/>
<polyline points="559.0,215.5 592.2,202.0" fill="none" stroke="#2c2c2c" stroke-width="1.06"/>
<polyline points="560.1,231.0 592.2,216.5" fill="none" stroke="#2c2c2c" stroke-width="0.95"/>
<ellipse cx="562.2" cy="222.7" rx="3.5" ry="6.5" transform="rotate(-20 562.2 222.7)" fill="none" stroke="#2c2c2c" stroke-width="0.90"/>
<ellipse cx="571.5" cy="218.6" rx="3.5" ry="6.5" transform="rotate(-20 571.5 218.6)" fill="none" stroke="#2c2c2c" stroke-width="0.90"/>
<ellipse cx="581.9" cy="214.3" rx="3.5" ry="6.5" transform="rotate(-20 581.9 214.3)" fill="none" stroke="#2c2c2c" stroke-width="0.90"/>
<ellipse cx="587.0" cy="211.2" rx="3.5" ry="6.5" transform="rotate(-20 587.0 211.2)" fill="none" stroke="#2c2c2c" stroke-width="0.90"/>
<circle cx="562.2" cy="222.7" r="2.0" fill="none" stroke="#2c2c2c" stroke-width="0.78"/>
<path d="M565,233 L567,240 M571,231 L573,238 M578,228 L580,235" fill="none" stroke="#2c2c2c" stroke-width="0.78"/>
<polyline points="610.5,199.8 598.0,205.2 590.0,188.0" fill="none" stroke="#2c2c2c" stroke-width="0.95"/>
<polyline points="559.1,249.7 559.1,263.0 568.5,258.8" fill="none" stroke="#2c2c2c" stroke-width="0.95"/>
<path d="M650.4,281 C650,274 651,269 653.5,267.4 C656,265 660,264.3 669.7,263.1 L686,261.2" fill="none" stroke="#2c2c2c" stroke-width="0.95"/>
<path d="M659,263 C661,258 665,255 671,253.7 C676,252.8 682,254 687.2,258.7" fill="none" stroke="#2c2c2c" stroke-width="0.95"/>
<polygon points="642.9,285.5 650.6,281.1 659.4,285.5 651.6,288.9" fill="#fff" stroke="#2c2c2c" stroke-width="0.95"/>
<ellipse cx="651.0" cy="285.0" rx="2.5" ry="1.4" transform="rotate(-20 651.0 285.0)" fill="none" stroke="#2c2c2c" stroke-width="0.78"/>
<polyline points="642.9,285.5 642.9,300.0" fill="none" stroke="#2c2c2c" stroke-width="0.95"/>
<polyline points="651.6,288.9 663.2,314.5" fill="none" stroke="#2c2c2c" stroke-width="0.95"/>
<polyline points="659.4,285.5 672.0,310.7" fill="none" stroke="#2c2c2c" stroke-width="0.95"/>
<circle cx="643.7" cy="304.5" r="3.4" fill="none" stroke="#2c2c2c" stroke-width="1.01"/>
<circle cx="643.7" cy="304.5" r="2.2" fill="none" stroke="#2c2c2c" stroke-width="0.78"/>
<circle cx="653.0" cy="307.0" r="3.5" fill="none" stroke="#2c2c2c" stroke-width="1.01"/>
<circle cx="653.0" cy="307.0" r="2.2" fill="none" stroke="#2c2c2c" stroke-width="0.78"/>
<polygon points="686.0,261.2 693.4,257.5 699.6,260.6 692.2,264.3" fill="#fff" stroke="#2c2c2c" stroke-width="0.95"/>
<ellipse cx="693.4" cy="260.6" rx="2.5" ry="1.4" transform="rotate(-20 693.4 260.6)" fill="none" stroke="#2c2c2c" stroke-width="0.78"/>
<polyline points="686.0,261.2 686.0,292.3" fill="none" stroke="#2c2c2c" stroke-width="0.95"/>
<polyline points="692.2,264.3 705.8,292.3" fill="none" stroke="#2c2c2c" stroke-width="0.95"/>
<polyline points="691.0,267.4 704.6,292.3" fill="none" stroke="#2c2c2c" stroke-width="0.78"/>
<polyline points="689.5,268.5 701.5,293.0" fill="none" stroke="#2c2c2c" stroke-width="0.78"/>
<polyline points="699.6,260.6 704.9,268.0" fill="none" stroke="#2c2c2c" stroke-width="0.95"/>
<circle cx="680.3" cy="269.3" r="2.5" fill="none" stroke="#2c2c2c" stroke-width="1.01"/>
<circle cx="692.2" cy="287.4" r="3.0" fill="none" stroke="#2c2c2c" stroke-width="1.01"/>
<polyline points="704.9,268.0 754.7,290.5 762.2,316.0 769.7,337.1" fill="none" stroke="#2c2c2c" stroke-width="0.95"/>
<polyline points="703.0,272.0 750.0,294.0 745.0,297.5 732.0,300.0" fill="none" stroke="#2c2c2c" stroke-width="0.78"/>
<path d="M710.5,285.0 L711.5,278.5 C712.0,276.5 715.0,276.5 715.2,278.5 L714.5,282.0 L718.0,284.5" fill="none" stroke="#2c2c2c" stroke-width="0.90"/>
<circle cx="713.3" cy="279.2" r="1.2" fill="none" stroke="#2c2c2c" stroke-width="0.67"/>
<path d="M720.0,290.0 L721.0,283.5 C721.5,281.5 724.5,281.5 724.7,283.5 L724.0,287.0 L727.5,289.5" fill="none" stroke="#2c2c2c" stroke-width="0.90"/>
<circle cx="722.8" cy="284.2" r="1.2" fill="none" stroke="#2c2c2c" stroke-width="0.67"/>
<path d="M728.5,295.0 L729.5,288.5 C730.0,286.5 733.0,286.5 733.2,288.5 L732.5,292.0 L736.0,294.5" fill="none" stroke="#2c2c2c" stroke-width="0.90"/>
<circle cx="731.3" cy="289.2" r="1.2" fill="none" stroke="#2c2c2c" stroke-width="0.67"/>
<polyline points="704.6,267.4 754.5,291.0" fill="none" stroke="#2c2c2c" stroke-width="0.90"/>
<polyline points="727.0,289.0 744.0,297.0" fill="none" stroke="#2c2c2c" stroke-width="0.78"/>
<polyline points="669.0,303.9 712.0,291.0" fill="none" stroke="#2c2c2c" stroke-width="0.90"/>
<polyline points="670.0,306.5 713.0,293.5" fill="none" stroke="#2c2c2c" stroke-width="0.78"/>
<polyline points="684.5,324.2 720.3,310.7 742.0,298.0" fill="none" stroke="#2c2c2c" stroke-width="1.23"/>
<line x1="686.0" y1="299.0" x2="694.5" y2="315.5" stroke="#2c2c2c" stroke-width="0.84"/>
<line x1="693.9" y1="297.3" x2="702.4" y2="313.0" stroke="#2c2c2c" stroke-width="0.84"/>
<line x1="701.8" y1="295.6" x2="710.3" y2="310.5" stroke="#2c2c2c" stroke-width="0.84"/>
<line x1="709.7" y1="293.9" x2="718.2" y2="308.0" stroke="#2c2c2c" stroke-width="0.84"/>
<circle cx="680.7" cy="315.5" r="3.0" fill="none" stroke="#2c2c2c" stroke-width="0.90"/>
<path d="M640.0,313.6 C639.4,315.5 638.9,321.8 636.1,325.0 C633.3,328.2 626.5,330.3 623.0,332.9 C619.5,335.5 618.0,337.7 615.1,340.8 C612.2,343.9 607.8,348.0 605.9,351.3 C604.0,354.6 603.2,357.2 603.9,360.5 C604.5,363.8 607.3,366.4 609.8,371.0 C612.3,375.6 616.6,383.5 619.0,388.1 C621.4,392.7 623.0,393.8 624.3,398.6 C625.6,403.4 625.8,412.5 626.9,417.0 C628.0,421.5 619.6,418.4 630.6,425.4 C641.6,432.4 681.3,452.9 692.7,459.2 C704.1,465.5 698.0,462.4 699.0,463.0" fill="none" stroke="#2c2c2c" stroke-width="1.12"/>
<path d="M644.0,318.5 C643.3,320.3 642.8,326.4 640.0,329.5 C637.2,332.6 630.5,334.4 627.0,337.0 C623.5,339.6 621.8,342.2 619.0,345.0 C616.2,347.8 612.2,351.4 610.5,354.0 C608.8,356.6 608.1,357.8 608.8,360.5 C609.5,363.2 612.0,365.6 614.5,370.0 C617.0,374.4 621.1,382.3 623.5,387.0 C625.9,391.7 627.8,393.8 629.0,398.0 C630.2,402.2 630.7,409.7 631.0,412.0" fill="none" stroke="#2c2c2c" stroke-width="0.78"/>
<path d="M640,313.6 C645,311 650,311 652.6,311.6 C657,312.5 660,314 664.2,315.5 C670,318 674,320 676.8,322.3 C680,325 683,328 684.5,330" fill="none" stroke="#2c2c2c" stroke-width="1.12"/>
<path d="M645,315 C650,314 656,315 663,318 C669,321 674,324 680,331" fill="none" stroke="#2c2c2c" stroke-width="0.78"/>
<circle cx="607.9" cy="355.9" r="2.5" fill="none" stroke="#2c2c2c" stroke-width="1.01"/>
<circle cx="607.2" cy="363.8" r="2.5" fill="none" stroke="#2c2c2c" stroke-width="1.01"/>
<circle cx="619.0" cy="340.1" r="2.5" fill="none" stroke="#2c2c2c" stroke-width="1.01"/>
<circle cx="642.4" cy="316.5" r="2.5" fill="none" stroke="#2c2c2c" stroke-width="1.01"/>
<circle cx="630.6" cy="425.4" r="2.6" fill="none" stroke="#2c2c2c" stroke-width="1.01"/>
<circle cx="695.1" cy="463.1" r="2.6" fill="none" stroke="#2c2c2c" stroke-width="1.01"/>
<line x1="632.4" y1="324.7" x2="637.4" y2="327.2" stroke="#2c2c2c" stroke-width="0.78"/>
<polyline points="660.0,318.2 673.3,334.8 694.9,368.0 700.0,380.0" fill="none" stroke="#2c2c2c" stroke-width="0.90"/>
<polyline points="656.0,320.0 670.0,338.0 691.0,370.0" fill="none" stroke="#2c2c2c" stroke-width="0.78"/>
<rect x="691" y="366" width="5" height="5" transform="rotate(-30 693.5 368.5)" fill="#fff" stroke="#404040" stroke-width="0.7"/>
<line x1="694.0" y1="370.0" x2="684.0" y2="392.0" stroke="#2c2c2c" stroke-width="0.78"/>
<line x1="697.0" y1="371.0" x2="687.0" y2="393.0" stroke="#2c2c2c" stroke-width="0.78"/>
<ellipse cx="642.8" cy="370.9" rx="7.0" ry="10.4" transform="rotate(-18 642.8 370.9)" fill="none" stroke="#2c2c2c" stroke-width="1.06"/>
<ellipse cx="642.8" cy="370.9" rx="9.3" ry="12.4" transform="rotate(-18 642.8 370.9)" fill="none" stroke="#2c2c2c" stroke-width="0.84"/>
<path d="M627.7,369.1 C627.3,368.7 627.7,367.6 627.8,366.9 C627.8,366.2 627.9,365.4 628.1,364.7 C628.2,364.0 628.4,363.3 628.6,362.7 C628.8,362.0 629.0,361.4 629.3,360.8 C629.6,360.1 629.9,359.5 630.3,359.0 C630.6,358.4 631.0,357.9 631.4,357.4 C631.9,356.9 632.3,356.5 632.8,356.0 C633.3,355.6 633.8,354.7 634.3,354.9 C634.8,355.1 635.6,356.7 635.6,357.3 C635.6,357.8 634.8,357.9 634.4,358.2 C634.0,358.6 633.6,358.9 633.3,359.3 C633.0,359.8 632.6,360.2 632.4,360.7 C632.1,361.1 631.8,361.6 631.6,362.2 C631.4,362.7 631.2,363.2 631.0,363.8 C630.8,364.4 630.7,364.9 630.6,365.5 C630.5,366.1 630.4,366.7 630.4,367.4 C630.3,368.0 630.8,369.0 630.4,369.2 C629.9,369.5 628.2,369.5 627.7,369.1Z" fill="none" stroke="#2c2c2c" stroke-width="0.78"/>
<path d="M642.2,353.2 C642.5,352.8 643.4,353.4 644.1,353.5 C644.7,353.7 645.3,353.9 646.0,354.2 C646.6,354.4 647.2,354.7 647.8,355.1 C648.4,355.4 649.0,355.8 649.5,356.3 C650.1,356.7 650.7,357.2 651.2,357.7 C651.7,358.2 652.2,358.7 652.7,359.3 C653.2,359.8 653.6,360.4 654.1,361.1 C654.5,361.7 655.4,362.5 655.2,363.0 C655.1,363.6 653.5,364.4 653.0,364.3 C652.4,364.3 652.4,363.2 652.0,362.7 C651.6,362.1 651.3,361.6 650.9,361.1 C650.5,360.6 650.0,360.2 649.6,359.7 C649.2,359.3 648.7,358.9 648.2,358.5 C647.8,358.2 647.3,357.8 646.8,357.5 C646.3,357.2 645.8,357.0 645.2,356.8 C644.7,356.5 644.2,356.3 643.7,356.2 C643.2,356.0 642.4,356.4 642.1,355.9 C641.9,355.4 641.8,353.6 642.2,353.2Z" fill="none" stroke="#2c2c2c" stroke-width="0.78"/>
<path d="M657.9,372.7 C658.3,373.1 657.9,374.2 657.8,374.9 C657.8,375.6 657.7,376.4 657.5,377.1 C657.4,377.8 657.2,378.5 657.0,379.1 C656.8,379.8 656.6,380.4 656.3,381.0 C656.0,381.7 655.7,382.3 655.3,382.8 C655.0,383.4 654.6,383.9 654.2,384.4 C653.7,384.9 653.3,385.3 652.8,385.8 C652.3,386.2 651.8,387.1 651.3,386.9 C650.8,386.7 650.0,385.1 650.0,384.5 C650.0,384.0 650.8,383.9 651.2,383.6 C651.6,383.2 652.0,382.9 652.3,382.5 C652.6,382.0 653.0,381.6 653.2,381.1 C653.5,380.7 653.8,380.2 654.0,379.6 C654.2,379.1 654.4,378.6 654.6,378.0 C654.8,377.4 654.9,376.9 655.0,376.3 C655.1,375.7 655.2,375.1 655.2,374.4 C655.3,373.8 654.8,372.8 655.2,372.6 C655.7,372.3 657.4,372.3 657.9,372.7Z" fill="none" stroke="#2c2c2c" stroke-width="0.78"/>
<path d="M643.4,388.6 C643.1,389.0 642.2,388.4 641.5,388.3 C640.9,388.1 640.3,387.9 639.6,387.6 C639.0,387.4 638.4,387.1 637.8,386.7 C637.2,386.4 636.6,386.0 636.1,385.5 C635.5,385.1 634.9,384.6 634.4,384.1 C633.9,383.6 633.4,383.1 632.9,382.5 C632.4,382.0 632.0,381.4 631.5,380.7 C631.1,380.1 630.2,379.3 630.4,378.8 C630.5,378.2 632.1,377.4 632.6,377.5 C633.2,377.5 633.2,378.6 633.6,379.1 C634.0,379.7 634.3,380.2 634.7,380.7 C635.1,381.2 635.6,381.6 636.0,382.1 C636.4,382.5 636.9,382.9 637.4,383.3 C637.8,383.6 638.3,384.0 638.8,384.3 C639.3,384.6 639.8,384.8 640.4,385.0 C640.9,385.3 641.4,385.5 641.9,385.6 C642.4,385.8 643.2,385.4 643.5,385.9 C643.7,386.4 643.8,388.2 643.4,388.6Z" fill="none" stroke="#2c2c2c" stroke-width="0.78"/>
<circle cx="655.8" cy="368.0" r="1.7" fill="none" stroke="#2c2c2c" stroke-width="0.84"/>
<circle cx="647.2" cy="387.2" r="1.7" fill="none" stroke="#2c2c2c" stroke-width="0.84"/>
<circle cx="629.8" cy="373.8" r="1.7" fill="none" stroke="#2c2c2c" stroke-width="0.84"/>
<circle cx="638.4" cy="354.6" r="1.7" fill="none" stroke="#2c2c2c" stroke-width="0.84"/>
<line x1="624.3" y1="359.8" x2="658.4" y2="340.8" stroke="#2c2c2c" stroke-width="0.90"/>
<line x1="616.4" y1="385.0" x2="629.5" y2="378.5" stroke="#2c2c2c" stroke-width="0.90"/>
<line x1="617.5" y1="388.0" x2="630.5" y2="381.5" stroke="#2c2c2c" stroke-width="0.78"/>
<line x1="640.0" y1="394.0" x2="672.9" y2="375.6" stroke="#2c2c2c" stroke-width="0.90"/>
<line x1="633.8" y1="417.5" x2="675.4" y2="394.7" stroke="#2c2c2c" stroke-width="0.90"/>
<line x1="640.0" y1="427.7" x2="688.0" y2="401.0" stroke="#2c2c2c" stroke-width="0.90"/>
<line x1="623.0" y1="363.0" x2="636.0" y2="392.0" stroke="#2c2c2c" stroke-width="0.78"/>
<polyline points="611.8,409.6 623.6,404.9" fill="none" stroke="#2c2c2c" stroke-width="0.95"/>
<polyline points="611.8,409.6 611.8,419.1 713.2,478.0 769.0,445.0 769.0,435.6" fill="none" stroke="#2c2c2c" stroke-width="1.12"/>
<polyline points="611.8,409.6 694.3,459.2" fill="none" stroke="#2c2c2c" stroke-width="0.90"/>
<polyline points="713.2,468.6 713.2,478.0" fill="none" stroke="#2c2c2c" stroke-width="0.95"/>
<polyline points="699.0,463.0 713.2,468.6 769.0,435.6" fill="none" stroke="#2c2c2c" stroke-width="0.95"/>
<circle cx="739.9" cy="456.8" r="4.5" fill="none" stroke="#2c2c2c" stroke-width="1.01"/>
<circle cx="739.9" cy="456.8" r="2.8" fill="none" stroke="#2c2c2c" stroke-width="0.78"/>
<path d="M699,446.6 C701,442 706,438 710,437.1 C715,434 718,430 717.9,429.3 C720,425 721,421 721,419 L722,405" fill="none" stroke="#2c2c2c" stroke-width="0.95"/>
<path d="M695,457 C698,449 704,443 712,440 C716,437 719,432 720,426" fill="none" stroke="#2c2c2c" stroke-width="0.78"/>
<path d="M717.9,405 L718.5,448.2 C718.7,450.5 721.1,450.5 721.1,448.2 L720.7,405" fill="none" stroke="#2c2c2c" stroke-width="0.84"/>
<path d="M725.7,403 L726.3,443.5 C726.5,445.8 728.9,445.8 728.9,443.5 L728.5,403" fill="none" stroke="#2c2c2c" stroke-width="0.84"/>
<path d="M733.6,401 L734.2,435.6 C734.4,437.9 736.8,437.9 736.8,435.6 L736.4,401" fill="none" stroke="#2c2c2c" stroke-width="0.84"/>
<path d="M741.4,399 L742.0,434.1 C742.2,436.4 744.6,436.4 744.6,434.1 L744.2,399" fill="none" stroke="#2c2c2c" stroke-width="0.84"/>
<path d="M749,398 L749,436 M753,397 L753.5,432" fill="none" stroke="#2c2c2c" stroke-width="0.78"/>
<path d="M757,397 C772,400 778,415 770,432" fill="none" stroke="#2c2c2c" stroke-width="0.90"/>
<path d="M709.8,314.9 C706.5,316.1 694.0,319.6 689.9,322.4 C685.8,325.2 685.4,325.8 684.9,331.5 C684.4,337.2 684.4,347.8 686.6,356.4 C688.8,365.0 694.3,375.8 698.2,383.0 C702.1,390.2 705.1,395.9 709.8,399.5 C714.5,403.1 723.6,403.7 726.4,404.5" fill="none" stroke="#2c2c2c" stroke-width="0.95"/>
<path d="M710.2,315.6 C707.5,316.7 697.0,319.3 693.5,322.2 C690.0,325.1 689.4,327.0 689.2,333.2 C689.0,339.3 689.9,350.5 692.2,359.1 C694.6,367.6 699.5,377.6 703.2,384.3 C706.8,391.0 709.8,396.0 714.1,399.2 C718.4,402.4 726.6,402.7 729.1,403.4" fill="none" stroke="#2c2c2c" stroke-width="0.95"/>
<path d="M710.7,316.3 C708.4,317.3 700.0,319.0 697.2,322.0 C694.3,325.1 693.4,328.2 693.5,334.8 C693.7,341.4 695.4,353.2 697.9,361.7 C700.3,370.2 704.7,379.4 708.2,385.6 C711.6,391.8 714.5,396.1 718.4,398.9 C722.4,401.6 729.6,401.7 731.8,402.3" fill="none" stroke="#2c2c2c" stroke-width="0.95"/>
<path d="M711.1,317.1 C709.4,317.9 703.0,318.6 700.8,321.9 C698.6,325.1 697.4,329.4 697.9,336.5 C698.3,343.6 701.0,356.0 703.5,364.4 C706.1,372.8 709.9,381.3 713.1,387.0 C716.3,392.7 719.2,396.2 722.8,398.5 C726.3,400.9 732.6,400.8 734.6,401.2" fill="none" stroke="#2c2c2c" stroke-width="0.95"/>
<path d="M711.6,317.8 C710.4,318.4 706.0,318.3 704.5,321.7 C702.9,325.1 701.4,330.6 702.2,338.1 C703.0,345.7 706.5,358.7 709.2,367.0 C711.8,375.4 715.1,383.1 718.1,388.3 C721.1,393.5 723.9,396.2 727.1,398.2 C730.3,400.2 735.6,399.8 737.3,400.1" fill="none" stroke="#2c2c2c" stroke-width="0.95"/>
<path d="M712.0,318.5 C711.4,319.0 709.0,317.9 708.1,321.5 C707.2,325.1 705.4,331.8 706.5,339.8 C707.6,347.8 712.0,361.4 714.8,369.7 C717.6,378.0 720.3,384.9 723.1,389.6 C725.9,394.3 728.6,396.3 731.4,397.9 C734.2,399.5 738.6,398.8 740.0,399.0" fill="none" stroke="#2c2c2c" stroke-width="0.95"/>
<path d="M711.8,322.8 C709.1,326.5 712.7,331.8 711.8,335.2 C710.9,338.6 707.0,341.2 706.3,343.5 C705.6,345.8 706.3,346.9 707.7,349.0 C709.1,351.1 712.3,352.1 714.6,356.0 C716.9,359.9 720.4,368.8 721.5,372.5 C722.6,376.2 721.0,375.9 721.5,378.0 C722.0,380.1 721.9,383.4 724.2,385.0 C726.5,386.6 731.6,387.0 735.3,387.7 C739.0,388.4 742.7,389.1 746.4,389.1 C750.1,389.1 753.7,389.1 757.4,387.7 C761.1,386.3 765.3,384.2 768.5,380.8 C771.7,377.4 775.0,371.4 776.8,367.0 C778.6,362.6 779.5,357.8 779.5,354.6 C779.5,351.4 778.6,350.7 776.8,347.7 C775.0,344.7 770.8,341.2 768.5,336.6 C766.2,332.0 766.9,324.1 763.0,320.0 C759.1,315.9 750.8,313.2 745.0,312.0 C739.2,310.8 733.5,311.2 728.0,313.0 C722.5,314.8 714.5,319.1 711.8,322.8Z" fill="#fff" stroke="#2c2c2c" stroke-width="1.12"/>
<circle cx="719.4" cy="327.6" r="3.0" fill="none" stroke="#2c2c2c" stroke-width="1.01"/>
<circle cx="711.8" cy="344.2" r="3.5" fill="none" stroke="#2c2c2c" stroke-width="1.01"/>
<circle cx="727.0" cy="380.8" r="3.0" fill="none" stroke="#2c2c2c" stroke-width="1.01"/>
<circle cx="758.1" cy="383.6" r="3.0" fill="none" stroke="#2c2c2c" stroke-width="1.01"/>
<circle cx="774.0" cy="353.2" r="3.0" fill="none" stroke="#2c2c2c" stroke-width="1.01"/>
<circle cx="728.6" cy="316.6" r="3.0" fill="none" stroke="#2c2c2c" stroke-width="1.01"/>
<circle cx="757.2" cy="316.6" r="3.0" fill="none" stroke="#2c2c2c" stroke-width="1.01"/>
<path d="M741,386 C741,381 746,377 749,380 C751,384 749,387 745,388 Z" fill="none" stroke="#2c2c2c" stroke-width="0.90"/>
<path d="M763,376 C762,370 768,367 770,371 C771,375 768,379 765,379 Z" fill="none" stroke="#2c2c2c" stroke-width="0.90"/>
<ellipse cx="742.9" cy="348.3" rx="20.7" ry="24.9" transform="rotate(-10 742.9 348.3)" fill="none" stroke="#2c2c2c" stroke-width="1.12"/>
<path d="M721.5,333.8 C716,345 722,360 738,367" fill="none" stroke="#2c2c2c" stroke-width="0.90"/>
<line x1="742.2" y1="347.0" x2="763.0" y2="337.3" stroke="#2c2c2c" stroke-width="0.90"/>
<polyline points="776.8,372.5 786.5,378.0 786.5,403.0 776.0,398.0" fill="none" stroke="#2c2c2c" stroke-width="0.95"/>
<polyline points="779.5,365.6 788.0,370.0 788.0,400.0" fill="none" stroke="#2c2c2c" stroke-width="0.78"/>
<circle cx="782.3" cy="380.8" r="2.0" fill="none" stroke="#2c2c2c" stroke-width="0.78"/>
<circle cx="782.3" cy="386.4" r="2.0" fill="none" stroke="#2c2c2c" stroke-width="0.78"/>
<circle cx="782.3" cy="391.9" r="2.0" fill="none" stroke="#2c2c2c" stroke-width="0.78"/>
<path d="M760.2,397.4 C770,400 774,404 774,405.7" fill="none" stroke="#2c2c2c" stroke-width="0.90"/>
<path d="M511.1,386.9 C511.6,386.7 511.3,384.6 513.8,385.5 C516.3,386.4 522.0,390.1 526.1,392.5 C530.2,394.9 535.4,397.7 538.5,400.0 C541.6,402.3 542.9,404.0 544.8,406.2 C546.7,408.4 544.3,405.1 549.8,413.2 C555.2,421.3 572.2,446.6 577.5,454.7 C582.8,462.8 579.3,455.8 581.6,461.6 C583.9,467.5 589.0,484.3 591.1,489.8 C593.2,495.3 593.9,492.3 594.4,494.8 C594.9,497.3 595.8,501.5 594.4,504.8 C593.0,508.1 589.1,511.9 586.1,514.7 C583.1,517.5 578.6,518.4 576.1,521.4 C573.6,524.4 573.8,528.6 571.1,533.0 C568.4,537.4 563.9,544.2 560.0,548.0 C556.1,551.8 550.0,554.7 548.0,556.0" fill="none" stroke="#2c2c2c" stroke-width="1.12"/>
<path d="M516.1,396.2 C519.2,397.0 530.4,398.9 534.8,401.2 C539.2,403.5 539.8,407.2 542.3,409.9 C544.8,412.6 544.7,409.5 549.7,417.4 C554.7,425.3 567.4,449.1 572.1,457.2 C576.8,465.3 575.4,460.2 578.0,466.0 C580.6,471.8 585.4,486.9 587.5,492.0 C589.6,497.1 590.0,494.6 590.5,496.5 C591.0,498.4 591.7,501.0 590.5,503.5 C589.3,506.0 586.3,509.1 583.5,511.5 C580.7,513.9 576.1,514.9 573.5,518.0 C570.9,521.1 570.8,525.5 568.0,530.0 C565.2,534.5 558.8,542.5 557.0,545.0" fill="none" stroke="#2c2c2c" stroke-width="0.84"/>
<polyline points="511.1,386.9 510.4,398.0 512.0,404.0" fill="none" stroke="#2c2c2c" stroke-width="1.01"/>
<circle cx="514.5" cy="390.4" r="2.3" fill="none" stroke="#2c2c2c" stroke-width="1.01"/>
<circle cx="546.0" cy="410.5" r="2.3" fill="none" stroke="#2c2c2c" stroke-width="1.01"/>
<circle cx="577.0" cy="459.1" r="2.3" fill="none" stroke="#2c2c2c" stroke-width="1.01"/>
<circle cx="591.9" cy="493.1" r="2.3" fill="none" stroke="#2c2c2c" stroke-width="1.01"/>
<circle cx="591.9" cy="501.4" r="2.3" fill="none" stroke="#2c2c2c" stroke-width="1.01"/>
<path d="M483.9,403.5 C484.2,402.0 488.9,398.7 490.0,398.0 C491.1,397.3 493.8,396.2 495.0,396.2 C496.2,396.1 500.9,397.0 502.5,397.5 C504.1,398.0 509.5,400.1 511.2,401.2 C512.9,402.3 518.3,407.3 519.9,408.7 C521.5,410.1 526.1,413.8 527.3,414.9 C528.5,416.0 531.7,418.7 532.3,419.9 C532.9,421.1 532.6,425.1 533.6,427.3 C534.6,429.5 540.3,439.0 542.3,442.2 C544.3,445.4 551.3,456.8 553.5,459.7 C555.7,462.6 563.2,468.8 564.7,470.8 C566.2,472.8 567.9,477.5 568.4,479.6 C568.9,481.7 570.0,489.5 570.0,492.0 C570.0,494.5 569.0,502.4 568.0,505.0 C567.0,507.6 561.6,515.5 560.0,518.0 C558.4,520.5 553.6,527.8 552.0,530.0 C550.4,532.2 544.9,538.4 544.0,540.0 C543.1,541.6 543.7,545.2 542.9,546.3 C542.1,547.4 537.6,551.0 536.3,551.3 C535.0,551.6 534.8,551.8 529.6,549.6 C524.5,547.4 489.9,532.0 484.8,529.7 C479.7,527.4 479.2,527.3 478.2,526.3 C477.2,525.3 476.3,522.5 474.8,519.7 C473.3,516.9 465.2,502.2 463.2,498.1 C461.2,494.0 456.1,481.5 454.9,478.2 C453.7,474.9 452.1,466.9 451.6,464.9 C451.1,462.9 450.1,459.7 449.9,458.3 C449.7,456.9 448.8,451.7 449.4,450.5 C450.0,449.3 455.5,447.9 456.3,446.4 C457.1,444.9 457.2,437.2 457.7,435.3 C458.2,433.4 459.6,428.5 461.1,427.0 C462.6,425.5 471.2,420.9 472.9,420.1 C474.6,419.3 477.0,419.4 478.4,418.7 C479.8,418.0 486.1,414.7 486.7,413.2 C487.2,411.7 483.6,405.0 483.9,403.5Z" fill="#fff" stroke="#2c2c2c" stroke-width="1.12"/>
<circle cx="487.4" cy="405.6" r="4.0" fill="none" stroke="#2c2c2c" stroke-width="0.95"/>
<circle cx="487.4" cy="405.6" r="2.2" fill="none" stroke="#2c2c2c" stroke-width="0.78"/>
<circle cx="482.6" cy="420.1" r="4.0" fill="none" stroke="#2c2c2c" stroke-width="0.95"/>
<circle cx="482.6" cy="420.1" r="2.2" fill="none" stroke="#2c2c2c" stroke-width="0.78"/>
<circle cx="463.9" cy="430.5" r="4.0" fill="none" stroke="#2c2c2c" stroke-width="0.95"/>
<circle cx="463.9" cy="430.5" r="2.2" fill="none" stroke="#2c2c2c" stroke-width="0.78"/>
<path d="M495.0,401.2 C497.1,401.4 503.5,400.9 507.4,402.4 C511.3,403.8 515.7,407.2 518.6,409.9 C521.5,412.6 523.3,415.9 524.9,418.6 C526.5,421.3 527.5,424.8 528.0,426.0" fill="none" stroke="#2c2c2c" stroke-width="0.84"/>
<path d="M434.6,471.5 C436,466 442,461 448.7,460.3 L450.6,462.6 L452.9,473.2 L458,485 L464.5,500" fill="none" stroke="#2c2c2c" stroke-width="1.06"/>
<path d="M434.6,471.5 L443,481.5 L449,490 L455.4,500" fill="none" stroke="#2c2c2c" stroke-width="1.06"/>
<polyline points="443.5,480.2 452.3,473.8" fill="none" stroke="#2c2c2c" stroke-width="0.90"/>
<polyline points="444.8,482.6 453.2,476.5" fill="none" stroke="#2c2c2c" stroke-width="0.90"/>
<path d="M449,446 C452,444 457,443 460,445 L461,452 C458,455 453,456 450,455 C447,452 447,448 449,446 Z" fill="#fff" stroke="#2c2c2c" stroke-width="0.95"/>
<circle cx="452.0" cy="450.8" r="2.2" fill="none" stroke="#2c2c2c" stroke-width="0.90"/>
<polygon points="451.2,494.8 461.2,489.8 456.0,499.0" fill="none" stroke="#2c2c2c" stroke-width="0.90"/>
<ellipse cx="497.0" cy="471.0" rx="29.0" ry="34.5" transform="rotate(-22 497.0 471.0)" fill="none" stroke="#2c2c2c" stroke-width="1.12"/>
<ellipse cx="497.0" cy="471.0" rx="26.5" ry="32.0" transform="rotate(-22 497.0 471.0)" fill="none" stroke="#2c2c2c" stroke-width="0.90"/>
<ellipse cx="497.0" cy="471.0" rx="25.0" ry="30.5" transform="rotate(-22 497.0 471.0)" fill="none" stroke="#2c2c2c" stroke-width="0.67"/>
<ellipse cx="496.5" cy="470.0" rx="14.0" ry="18.5" transform="rotate(-25 496.5 470.0)" fill="none" stroke="#2c2c2c" stroke-width="1.12"/>
<ellipse cx="496.5" cy="470.0" rx="12.3" ry="16.5" transform="rotate(-25 496.5 470.0)" fill="none" stroke="#2c2c2c" stroke-width="0.90"/>
<ellipse cx="497.5" cy="469.0" rx="9.8" ry="13.8" transform="rotate(-25 497.5 469.0)" fill="none" stroke="#2c2c2c" stroke-width="1.01"/>
<line x1="491.4" y1="472.4" x2="451.6" y2="494.8" stroke="#2c2c2c" stroke-width="0.90"/>
<polyline points="455.4,493.1 469.5,485.6" fill="none" stroke="#2c2c2c" stroke-width="0.90"/>
<polyline points="463.2,521.4 479.8,513.1" fill="none" stroke="#2c2c2c" stroke-width="0.90"/>
<circle cx="472.3" cy="483.2" r="3.5" fill="none" stroke="#2c2c2c" stroke-width="1.01"/>
<circle cx="472.3" cy="483.2" r="2.0" fill="none" stroke="#2c2c2c" stroke-width="0.78"/>
<circle cx="486.5" cy="505.6" r="2.2" fill="none" stroke="#2c2c2c" stroke-width="0.90"/>
<circle cx="517.2" cy="506.4" r="3.8" fill="none" stroke="#2c2c2c" stroke-width="1.01"/>
<circle cx="517.2" cy="506.4" r="2.2" fill="none" stroke="#2c2c2c" stroke-width="0.78"/>
<circle cx="524.7" cy="514.7" r="2.5" fill="none" stroke="#2c2c2c" stroke-width="1.01"/>
<circle cx="519.7" cy="525.5" r="2.0" fill="none" stroke="#2c2c2c" stroke-width="0.90"/>
<ellipse cx="481.5" cy="523.0" rx="4.0" ry="5.0" transform="rotate(-25 481.5 523.0)" fill="none" stroke="#2c2c2c" stroke-width="1.01"/>
<circle cx="518.0" cy="456.6" r="2.5" fill="none" stroke="#2c2c2c" stroke-width="1.01"/>
<circle cx="512.4" cy="441.0" r="3.0" fill="none" stroke="#2c2c2c" stroke-width="1.01"/>
<circle cx="512.4" cy="441.0" r="1.8" fill="none" stroke="#2c2c2c" stroke-width="0.78"/>
<circle cx="517.4" cy="457.2" r="2.5" fill="none" stroke="#2c2c2c" stroke-width="1.01"/>
<circle cx="519.9" cy="426.1" r="2.5" fill="none" stroke="#2c2c2c" stroke-width="1.01"/>
<path d="M507.4,413.6 L511.2,411.1 C516,414 521,416 524.9,418.6 C526,424 524,430 521,432 C517,433 514,428 513,423 Z" fill="none" stroke="#2c2c2c" stroke-width="0.90"/>
<circle cx="549.7" cy="474.6" r="3.0" fill="none" stroke="#2c2c2c" stroke-width="1.01"/>
<path d="M495.0,413.6 C496.3,415.7 500.3,421.6 503.0,426.0 C505.7,430.4 508.2,435.9 511.2,439.8 C514.2,443.8 516.6,444.5 521.1,449.7 C525.6,454.9 534.0,464.1 538.5,470.8 C543.0,477.5 545.8,483.5 548.0,490.0 C550.2,496.5 551.3,506.7 552.0,510.0" fill="none" stroke="#2c2c2c" stroke-width="0.90"/>
<polygon points="528.6,428.6 553.5,465.9 550.8,467.8 526.0,430.5" fill="none" stroke="#2c2c2c" stroke-width="0.90"/>
<polygon points="488.1,521.0 526.3,545.0 524.5,549.5 486.5,525.5" fill="none" stroke="#2c2c2c" stroke-width="0.90"/>
<circle cx="549.6" cy="474.9" r="3.2" fill="none" stroke="#2c2c2c" stroke-width="1.01"/>
<path d="M543,470 C545,466 553,466 555,471 C557,478 552,482 548,481 Z" fill="none" stroke="#2c2c2c" stroke-width="0.90"/>
<circle cx="571.1" cy="504.8" r="2.5" fill="none" stroke="#2c2c2c" stroke-width="1.01"/>
<circle cx="564.5" cy="516.4" r="3.2" fill="none" stroke="#2c2c2c" stroke-width="1.01"/>
<path d="M558,512 C560,508 568,508 570,513 C571,520 566,523 562,522 Z" fill="none" stroke="#2c2c2c" stroke-width="0.90"/>
<circle cx="559.5" cy="536.3" r="5.5" fill="none" stroke="#2c2c2c" stroke-width="1.01"/>
<circle cx="559.5" cy="536.3" r="3.5" fill="none" stroke="#2c2c2c" stroke-width="0.90"/>
<circle cx="560.5" cy="535.3" r="2.2" fill="none" stroke="#2c2c2c" stroke-width="0.78"/>
<circle cx="539.6" cy="552.9" r="2.5" fill="none" stroke="#2c2c2c" stroke-width="1.01"/>
<path d="M549,541 C546,548 547,555 551,558 L556,556" fill="none" stroke="#2c2c2c" stroke-width="0.90"/>
<line x1="575.0" y1="520.0" x2="571.0" y2="536.0" stroke="#2c2c2c" stroke-width="0.78"/>
</svg><!--/DRAW-->
<div class="a" id="hdr"></div>
<div class="a" id="hdrl"></div>
<div class="a" id="hdrl2"></div>
<div class="a" id="hdrl3"></div>
<div class="a" id="hsb"></div>
<div class="a" id="th1"></div>
<div class="a" id="th2"></div>
<div class="a" id="r0"></div>
<div class="a" id="r1"></div>
<div class="a" id="r2"></div>
<div class="a" id="lb"></div>

<!-- header -->
<span class="h" style="left:117px">Ref #</span>
<span class="h" style="left:210px">Part #</span>
<span class="h" style="left:371px">Description</span>
<span class="h" style="left:558px">Qty</span>
<span class="h" style="left:800px">Context Note</span>
<span class="h" style="left:1101px">Foot Note</span>

<span class="c" style="left:120px;top:694px">92150B</span>
<span class="c" style="left:204px;top:694px">92150-2252</span>
<span class="c" style="left:373px;top:694px">BOLT,8X45</span>
<span class="c" style="left:564px;top:694px">8</span>
<span class="c" style="left:130px;top:711px">130</span>
<span class="c" style="left:209px;top:711px">130T0845</span>
<span class="c" style="left:346px;top:711px">BOLT-FLANGED,8X45</span>
<span class="c" style="left:564px;top:711px">6</span>


<!-- toolbar icons -->
<svg class="a" style="left:0;top:29px" width="130" height="28" viewBox="0 29 130 28">
 <g>
  <line x1="6.5" y1="49.5" x2="11.5" y2="44.5" stroke="#0a1450" stroke-width="3.2" stroke-linecap="round"/>
  <line x1="6.2" y1="48.5" x2="10.5" y2="44.2" stroke="#7aa0e0" stroke-width="0.8" stroke-dasharray="1 1"/>
  <circle cx="15" cy="40.6" r="4.9" fill="#f4f4f4" stroke="#000" stroke-width="1.5"/>
  <rect x="12.2" y="39.8" width="5.6" height="1.8" fill="#000"/>
  <rect x="14.1" y="37.9" width="1.8" height="5.6" fill="#000"/>
 </g>
 <g>
  <line x1="29.5" y1="49.5" x2="34.5" y2="44.5" stroke="#0a1450" stroke-width="3.2" stroke-linecap="round"/>
  <line x1="29.2" y1="48.5" x2="33.5" y2="44.2" stroke="#7aa0e0" stroke-width="0.8" stroke-dasharray="1 1"/>
  <circle cx="38.1" cy="40.6" r="4.9" fill="#f4f4f4" stroke="#000" stroke-width="1.5"/>
  <rect x="35.2" y="39.8" width="5.8" height="1.8" fill="#000"/>
 </g>
 <g>
  <polygon points="62,35.5 66,35.5 59.5,41.5 63.5,41.5 55,49 58.5,43 54.5,43" fill="#f4f08a" stroke="none"/>
  <polyline points="66,35 58.5,41.8 62.5,41.8" fill="none" stroke="#000" stroke-width="1.2"/>
  <polyline points="55,42.5 59,42.5" fill="none" stroke="#000" stroke-width="1.1"/>
  <line x1="63.5" y1="41.5" x2="54.5" y2="49.3" stroke="#000" stroke-width="1.3"/>
 </g>
 <g>
  <rect x="82" y="37" width="6.5" height="5" fill="#efe7a8"/>
  <polygon points="75.5,44.3 80.5,41 80.5,47.5" fill="#1a1a6a"/>
  <circle cx="84" cy="44.6" r="3.8" fill="#1e8a80"/>
  <g fill="#fff" stroke="#000" stroke-width="0.8">
   <rect x="80.5" y="35.3" width="1.9" height="1.9"/><rect x="87.9" y="35.3" width="1.9" height="1.9"/>
   <rect x="74.5" y="39.7" width="1.9" height="1.9"/><rect x="74.5" y="44.6" width="1.9" height="1.9"/>
   <rect x="79.4" y="47.6" width="1.9" height="1.9"/><rect x="86.8" y="47.6" width="1.9" height="1.9"/>
   <rect x="87.9" y="42.4" width="1.9" height="1.9"/><rect x="79.7" y="40.2" width="1.7" height="1.7"/><rect x="84.6" y="39.4" width="1.7" height="1.7"/>
  </g>
 </g>

 <g>
  <polygon points="100,43 103,36.5 111,36.5 109,43" fill="#fff" stroke="#000" stroke-width="1"/>
  <line x1="104" y1="38.5" x2="108.5" y2="38.5" stroke="#555" stroke-width="0.8"/>
  <line x1="103" y1="40.5" x2="107.5" y2="40.5" stroke="#555" stroke-width="0.8"/>
  <polygon points="97.5,43.5 110,43.5 112.5,41.5 112.5,47 110,49.5 97.5,49.5" fill="#f2f2f2" stroke="#000" stroke-width="1"/>
  <line x1="98" y1="46.5" x2="110" y2="46.5" stroke="#000" stroke-width="0.9"/>
  <line x1="110" y1="43.5" x2="110" y2="49.5" stroke="#000" stroke-width="0.8"/>
 </g>
</svg>
<!-- top right notebook icon -->
<svg class="a" style="left:1188px;top:2px" width="21" height="22" viewBox="1188 2 21 22">
 <polygon points="1192.3,11 1194.3,4.5 1198.5,4.5 1200.2,6.5 1202.5,6.2 1207.7,14.3 1201.5,19.5 1197.5,19.5 1192.6,13.5" fill="#fff" stroke="#000" stroke-width="1.2" stroke-linejoin="round"/>
 <polygon points="1193.2,12 1196.5,11 1198.5,14.5 1197,17" fill="#b0b0b0"/>
 <path d="M1198.5,13.5 l1.5,2.5 l1.5,-1 l1,1.5" stroke="#999" stroke-width="1.1" fill="none"/>
 <rect x="1194.2" y="4.3" width="4.4" height="7" fill="#0a0a1a"/>
 <rect x="1195.5" y="5.8" width="1.7" height="0.9" fill="#ddd"/><rect x="1195.5" y="7.7" width="1.7" height="0.9" fill="#ddd"/><rect x="1195.5" y="9.6" width="1.7" height="0.9" fill="#ddd"/>
</svg>
<!-- table header icons -->
<svg class="a" style="left:0;top:653px" width="1209" height="70" viewBox="0 653 1209 70">
 <g fill="#f0f0f0">
  <path id="s1" d="M79.6,672 L83.6,667.6 L87.6,672 Z M79.6,673.2 L87.6,673.2 L83.6,677.4 Z"/>
  <use href="#s1" x="88"/>
  <use href="#s1" x="189"/>
  <use href="#s1" x="423"/>
  <use href="#s1" x="524"/>
  <use href="#s1" x="954"/>
  <use href="#s1" x="1110"/>
 </g>
 <g>
  <rect id="cb1" x="357" y="664" width="12.5" height="12" rx="1.5" fill="#1f72e6"/>
  <polyline id="ck1" points="359.5,670 362.3,672.9 367.3,666.4" fill="none" stroke="#fff" stroke-width="1.9"/>
  <use href="#cb1" x="187.5"/><use href="#ck1" x="187.5"/>
  <use href="#cb1" x="429"/><use href="#ck1" x="429"/>
  <use href="#cb1" x="731.5"/><use href="#ck1" x="731.5"/>
 </g>
 <!-- note icons -->
 <g id="note">
  <rect x="77" y="693" width="13.3" height="14.5" rx="1.5" fill="#fff" stroke="#000" stroke-width="1.1"/>
  <line x1="77.5" y1="693" x2="90" y2="693" stroke="#000" stroke-width="1.3" stroke-dasharray="1 1"/>
  <line x1="79.5" y1="697.5" x2="84" y2="697.5" stroke="#000" stroke-width="1"/>
  <line x1="79.5" y1="700" x2="83" y2="700" stroke="#000" stroke-width="1"/>
  <line x1="85.5" y1="703" x2="87" y2="703" stroke="#000" stroke-width="1"/>
  <polyline points="78.8,701 81.2,704.5 88.5,696" fill="none" stroke="#1515a8" stroke-width="1.6"/>
 </g>
 <use href="#note" y="17.5"/>
 <path d="M77,687.5 Q77,689.6 79,689.6 L88.5,689.6 Q90.5,689.6 90.5,687.5" fill="#fff" stroke="#000" stroke-width="1"/>
 <!-- back arrow -->
 <path d="M23,714.8 L28.5,710.2 L28.8,713 Q36,713.5 38,723 L35,723 Q33.5,717.5 29,717.3 L29.2,720 Z" fill="#000"/>
</svg>
</body></html>
